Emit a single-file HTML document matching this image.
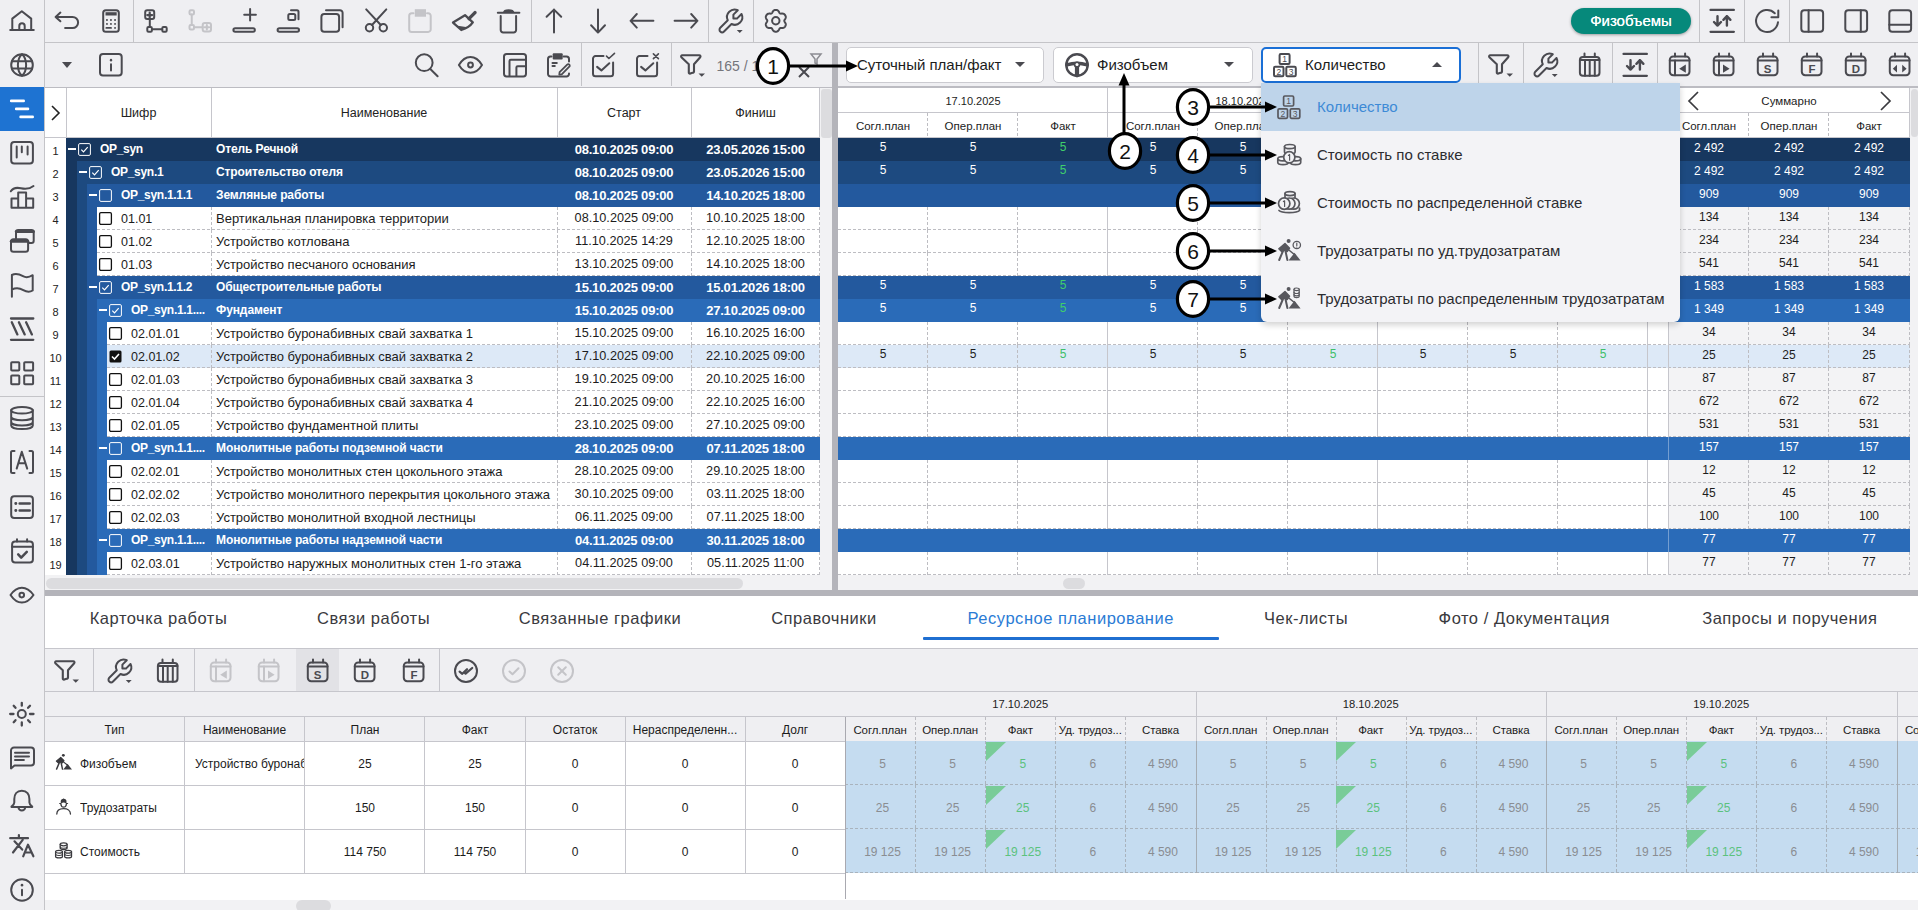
<!DOCTYPE html><html><head><meta charset="utf-8"><style>

*{box-sizing:border-box}
html,body{margin:0;padding:0}
body{width:1918px;height:910px;overflow:hidden;position:relative;background:#efeff2;font-family:"Liberation Sans",sans-serif;color:#222}
.ic{position:absolute;overflow:visible}
.t{position:absolute;white-space:nowrap;overflow:hidden}
.c{text-align:center}
div{position:absolute}

</style></head><body>
<div style="position:absolute;left:0px;top:0px;width:44px;height:910px;background:#efeff2"></div>
<div style="position:absolute;left:44px;top:0px;width:1px;height:910px;background:#c4c4c8"></div>
<div style="position:absolute;left:0px;top:87px;width:44px;height:44px;background:#1e73d2"></div>
<svg class="ic" style="left:10.00px;top:9.00px;width:24.0px;height:24.0px;color:#4a4a50" viewBox="0 0 24 24" fill="none" stroke="currentColor" stroke-width="2" stroke-linecap="round" stroke-linejoin="round"><path d="M0.3 21H23.7" stroke-width="2.2"/><path d="M2.3 20.8V9.6L11.8 2.3L21.2 9.6V20.8M9.3 20.8V16.9A2.7 2.7 0 0 1 14.7 16.9V20.8"/></svg>
<svg class="ic" style="left:10.00px;top:53.00px;width:24.0px;height:24.0px;color:#4a4a50" viewBox="0 0 24 24" fill="none" stroke="currentColor" stroke-width="2" stroke-linecap="round" stroke-linejoin="round"><circle cx="12" cy="12" r="10.8"/><path d="M12 1.2C6.5 6 6.5 18 12 22.8M12 1.2C17.5 6 17.5 18 12 22.8M1.9 8.2H22.1M1.9 15.5H22.1"/></svg>
<svg class="ic" style="left:10.00px;top:141.00px;width:24.0px;height:24.0px;color:#4a4a50" viewBox="0 0 24 24" fill="none" stroke="currentColor" stroke-width="2" stroke-linecap="round" stroke-linejoin="round"><rect x="1.2" y="1" width="21.7" height="21.6" rx="3"/><path d="M6.7 5.5V16.4M11.8 5.5V11.3M17.6 5.5V13.5"/></svg>
<svg class="ic" style="left:10.00px;top:185.00px;width:24.0px;height:24.0px;color:#4a4a50" viewBox="0 0 24 24" fill="none" stroke="currentColor" stroke-width="2" stroke-linecap="round" stroke-linejoin="round"><path d="M0.8 6.3C3 2.8 6.5 2.3 11 3.3S19 4.6 23.5 1"/><path d="M1.5 22.8V13.6H8.2V22.8ZM8.2 22.8V7.4H16.1V22.8M16.1 22.8V13.6H23.2V22.8ZM1.5 22.8H23.2"/></svg>
<svg class="ic" style="left:10.00px;top:229.00px;width:24.0px;height:24.0px;color:#4a4a50" viewBox="0 0 24 24" fill="none" stroke="currentColor" stroke-width="2" stroke-linecap="round" stroke-linejoin="round"><rect x="1" y="10.2" width="17.1" height="12.6" rx="2.5"/><path d="M1.3 12.3H17.8" stroke-width="3"/><path d="M6 9.5V3.2A2.2 2.2 0 0 1 8.2 1H21.5A2.2 2.2 0 0 1 23.7 3.2V11.8A2.2 2.2 0 0 1 21.5 14H19"/><path d="M6.3 2.6H23.4" stroke-width="3"/></svg>
<svg class="ic" style="left:10.00px;top:273.00px;width:24.0px;height:24.0px;color:#4a4a50" viewBox="0 0 24 24" fill="none" stroke="currentColor" stroke-width="2" stroke-linecap="round" stroke-linejoin="round"><path d="M1.9 23.7V2C6 -0.2 9.5 1.2 13 3.2S19.5 4.2 22.7 2.2V17.5C19.8 19.3 16.5 19 13.3 17.1S6 14.5 1.9 16.5"/></svg>
<svg class="ic" style="left:10.00px;top:317.00px;width:24.0px;height:24.0px;color:#4a4a50" viewBox="0 0 24 24" fill="none" stroke="currentColor" stroke-width="2" stroke-linecap="round" stroke-linejoin="round"><path d="M1 1.5H23.3M1 22.8H23.3M1.8 5.2L7.4 17.4M8.9 5.2L14.7 17.4M16.1 5.2L21.9 17.4" stroke-width="2.3"/></svg>
<svg class="ic" style="left:10.00px;top:361.00px;width:24.0px;height:24.0px;color:#4a4a50" viewBox="0 0 24 24" fill="none" stroke="currentColor" stroke-width="2" stroke-linecap="round" stroke-linejoin="round"><rect x="1.2" y="1.2" width="8.1" height="8.3" rx="0.8"/><rect x="14.2" y="1.2" width="8.9" height="8.3" rx="0.8"/><rect x="1.2" y="14.4" width="8.1" height="8.9" rx="0.8"/><rect x="14.2" y="14.4" width="8.9" height="8.9" rx="0.8"/></svg>
<svg class="ic" style="left:10.00px;top:406.00px;width:24.0px;height:24.0px;color:#4a4a50" viewBox="0 0 24 24" fill="none" stroke="currentColor" stroke-width="2" stroke-linecap="round" stroke-linejoin="round"><ellipse cx="12" cy="4.3" rx="10.8" ry="3.3"/><path d="M1.2 4.3V19.6C1.2 21.6 6 23.1 12 23.1S22.8 21.6 22.8 19.6V4.3M1.2 10.8C1.2 12.8 6 14.3 12 14.3S22.8 12.8 22.8 10.8M1.2 16C1.2 18 6 19.5 12 19.5S22.8 18 22.8 16"/></svg>
<svg class="ic" style="left:10.00px;top:450.00px;width:24.0px;height:24.0px;color:#4a4a50" viewBox="0 0 24 24" fill="none" stroke="currentColor" stroke-width="2" stroke-linecap="round" stroke-linejoin="round"><path d="M4.5 1H2.5A1.5 1.5 0 0 0 1 2.5V21.5A1.5 1.5 0 0 0 2.5 23H4.5M19.5 1H21.5A1.5 1.5 0 0 1 23 2.5V21.5A1.5 1.5 0 0 1 21.5 23H19.5M6.7 18.6L11.8 1.8L17.2 18.6M8.4 13.2H15.6"/></svg>
<svg class="ic" style="left:10.00px;top:494.50px;width:24.0px;height:24.0px;color:#4a4a50" viewBox="0 0 24 24" fill="none" stroke="currentColor" stroke-width="2" stroke-linecap="round" stroke-linejoin="round"><rect x="1.2" y="1.2" width="21.7" height="21.7" rx="3"/><path d="M5.7 8.5h.2M5.7 15.5h.2" stroke-width="2.8"/><path d="M9.6 8.5H19.8M9.6 15.5H19.8" stroke-width="2.4"/></svg>
<svg class="ic" style="left:10.00px;top:538.50px;width:24.0px;height:24.0px;color:#4a4a50" viewBox="0 0 24 24" fill="none" stroke="currentColor" stroke-width="2" stroke-linecap="round" stroke-linejoin="round"><rect x="2.1" y="2.6" width="20.8" height="20.8" rx="3"/><path d="M7 0.2V2.6M17.1 0.2V2.6M2.1 7.7H22.9"/><path d="M8.2 15.3L11.2 18.6L16.8 12.8" stroke-width="2.5"/></svg>
<svg class="ic" style="left:10.00px;top:582.50px;width:24.0px;height:24.0px;color:#4a4a50" viewBox="0 0 24 24" fill="none" stroke="currentColor" stroke-width="2" stroke-linecap="round" stroke-linejoin="round"><path d="M0.5 12C4 6.8 8 4.7 11.9 4.7S19.8 6.8 23.5 12C19.8 17.2 15.8 19.6 11.9 19.6S4 17.2 0.5 12Z"/><circle cx="11.75" cy="12.1" r="2.3"/></svg>
<svg class="ic" style="left:10.00px;top:701.50px;width:24.0px;height:24.0px;color:#4a4a50" viewBox="0 0 24 24" fill="none" stroke="currentColor" stroke-width="2" stroke-linecap="round" stroke-linejoin="round"><circle cx="11.8" cy="12" r="4"/><path d="M11.8 0.8V3.7M11.8 20.5V23.5M0.2 12H3.5M20 12H23.5M3.7 3.8L5.5 5.8M18.1 18.2L20 20.2M3.7 20.2L5.5 18.2M18.1 5.8L20 3.8" stroke-width="2.3"/></svg>
<svg class="ic" style="left:10.00px;top:745.00px;width:24.0px;height:24.0px;color:#4a4a50" viewBox="0 0 24 24" fill="none" stroke="currentColor" stroke-width="2" stroke-linecap="round" stroke-linejoin="round"><path d="M1 23.4V5.5A3 3 0 0 1 4 2.5H21A3 3 0 0 1 24 5.5V17.5A3 3 0 0 1 21 20.5H4.5Z"/><path d="M5 7.7H19M5 11.5H19M5 15H13.9"/></svg>
<svg class="ic" style="left:10.00px;top:790.00px;width:24.0px;height:24.0px;color:#4a4a50" viewBox="0 0 24 24" fill="none" stroke="currentColor" stroke-width="2" stroke-linecap="round" stroke-linejoin="round"><path d="M11.8 0.8C6.8 0.8 4.3 4.5 4.3 9V12.5C4.3 14 3 15.5 1.5 16.6V17H22.2V16.6C20.7 15.5 19.4 14 19.4 12.5V9C19.4 4.5 17 0.8 11.8 0.8Z"/><path d="M8.5 17.2A3.3 3.3 0 0 0 15.2 17.2"/></svg>
<svg class="ic" style="left:10.00px;top:834.00px;width:24.0px;height:24.0px;color:#4a4a50" viewBox="0 0 24 24" fill="none" stroke="currentColor" stroke-width="2" stroke-linecap="round" stroke-linejoin="round"><path d="M0.2 4.2H18M8.9 1V4.2M12.7 5.9L3 18.5M4.5 7.3L12.2 15.6M13.2 22.3L18 10.7L23.4 22.3M15 18.5H21.5" stroke-width="2.2"/></svg>
<svg class="ic" style="left:10.00px;top:878.00px;width:24.0px;height:24.0px;color:#4a4a50" viewBox="0 0 24 24" fill="none" stroke="currentColor" stroke-width="2" stroke-linecap="round" stroke-linejoin="round"><circle cx="12" cy="12" r="10.8"/><path d="M12 7V7.2" stroke-width="2.6"/><path d="M12 11.7V17.2"/></svg>
<svg class="ic" style="left:0px;top:87px;width:44px;height:44px" viewBox="0 0 44 44" fill="none" stroke="#fff" stroke-width="2.6" stroke-linecap="round"><path d="M11.2 13.9H23.7M16.2 21.9H28M20.6 29.9H32.7"/></svg>
<div style="position:absolute;left:0px;top:396px;width:44px;height:1px;background:#c4c4c8"></div>
<div style="position:absolute;left:45px;top:42px;width:1873px;height:1px;background:#c4c4c8"></div>
<div style="position:absolute;left:133px;top:0px;width:1px;height:42px;background:#c4c4c8"></div>
<div style="position:absolute;left:531px;top:0px;width:1px;height:42px;background:#c4c4c8"></div>
<div style="position:absolute;left:708px;top:0px;width:1px;height:42px;background:#c4c4c8"></div>
<div style="position:absolute;left:753px;top:0px;width:1px;height:42px;background:#c4c4c8"></div>
<div style="position:absolute;left:1699px;top:0px;width:1px;height:42px;background:#c4c4c8"></div>
<div style="position:absolute;left:1744px;top:0px;width:1px;height:42px;background:#c4c4c8"></div>
<div style="position:absolute;left:1789px;top:0px;width:1px;height:42px;background:#c4c4c8"></div>
<svg class="ic" style="left:55.00px;top:9.00px;width:24.0px;height:24.0px;color:#4a4a50" viewBox="0 0 24 24" fill="none" stroke="currentColor" stroke-width="2" stroke-linecap="round" stroke-linejoin="round"><path d="M5.4 3.6L0.6 7.9l4.8 4.4M0.6 7.9H17.5a5.6 5.6 0 0 1 0 11.2H10.1"/></svg>
<svg class="ic" style="left:99.00px;top:9.00px;width:24.0px;height:24.0px;color:#4a4a50" viewBox="0 0 24 24" fill="none" stroke="currentColor" stroke-width="2" stroke-linecap="round" stroke-linejoin="round"><rect x="4.2" y="1.2" width="15.6" height="21.6" rx="2.6"/><rect x="6.5" y="3.2" width="11.2" height="3.3" fill="currentColor" stroke="none"/><path d="M7.9 11h.1M11.9 11h.1M16 11h.1M7.9 14.9h.1M11.9 14.9h.1M16 14.9h.1M16 18.9h.1M7.4 18.9h4.6" stroke-width="1.9"/></svg>
<svg class="ic" style="left:144.00px;top:9.00px;width:24.0px;height:24.0px;color:#4a4a50" viewBox="0 0 24 24" fill="none" stroke="currentColor" stroke-width="2" stroke-linecap="round" stroke-linejoin="round"><rect x="1.2" y="1.2" width="9" height="8.7" rx="2"/><path d="M5.7 3.6v4.9M3.25 6.05h4.9" stroke-width="2.2"/><path d="M5.8 11v7"/><rect x="3.3" y="18.1" width="4.6" height="4.6" rx="1.2"/><rect x="18.3" y="18.1" width="4.4" height="4.6" rx="1.2"/><path d="M8 20.3h10.2"/></svg>
<svg class="ic" style="left:188.00px;top:9.00px;width:24.0px;height:24.0px;color:#c4c4c8" viewBox="0 0 24 24" fill="none" stroke="currentColor" stroke-width="2" stroke-linecap="round" stroke-linejoin="round"><rect x="1.5" y="1.2" width="4.5" height="4.3" rx="1.2"/><path d="M3.75 5.5V16"/><rect x="1.5" y="16" width="4.5" height="4.5" rx="1.2"/><path d="M6 18.25h8.7"/><rect x="14.7" y="14" width="8.3" height="8.4" rx="2"/><path d="M18.85 15.9v4.6M16.55 18.2h4.6"/></svg>
<svg class="ic" style="left:232.00px;top:9.00px;width:24.0px;height:24.0px;color:#4a4a50" viewBox="0 0 24 24" fill="none" stroke="currentColor" stroke-width="2" stroke-linecap="round" stroke-linejoin="round"><path d="M18.1 0V11.6M12.2 5.75H23.9"/><rect x="1.4" y="19.2" width="21.5" height="3.6" rx="1.8"/></svg>
<svg class="ic" style="left:276.00px;top:9.00px;width:24.0px;height:24.0px;color:#4a4a50" viewBox="0 0 24 24" fill="none" stroke="currentColor" stroke-width="2" stroke-linecap="round" stroke-linejoin="round"><rect x="12.3" y="5.1" width="7" height="6" rx="1.5"/><path d="M15 1.2H21a1.5 1.5 0 0 1 1.5 1.5V10.2"/><rect x="1.6" y="19.2" width="21.4" height="3.6" rx="1.8"/></svg>
<svg class="ic" style="left:320.00px;top:9.00px;width:24.0px;height:24.0px;color:#4a4a50" viewBox="0 0 24 24" fill="none" stroke="currentColor" stroke-width="2" stroke-linecap="round" stroke-linejoin="round"><rect x="1.4" y="5.1" width="17.7" height="17.7" rx="2.8"/><path d="M6 1.2H20a2.6 2.6 0 0 1 2.6 2.6V18.2"/></svg>
<svg class="ic" style="left:364.00px;top:9.00px;width:24.0px;height:24.0px;color:#4a4a50" viewBox="0 0 24 24" fill="none" stroke="currentColor" stroke-width="2" stroke-linecap="round" stroke-linejoin="round"><circle cx="5.5" cy="18.7" r="3.7"/><circle cx="19.3" cy="18.7" r="3.7"/><path d="M2.2 0.4L16.8 16M22.3 0.4L8 16"/></svg>
<svg class="ic" style="left:408.00px;top:9.00px;width:24.0px;height:24.0px;color:#c4c4c8" viewBox="0 0 24 24" fill="none" stroke="currentColor" stroke-width="2" stroke-linecap="round" stroke-linejoin="round"><path d="M5.5 4.2H3.7A2.5 2.5 0 0 0 1.2 6.7V20.4A2.5 2.5 0 0 0 3.7 22.9H20.2A2.5 2.5 0 0 0 22.7 20.4V6.7A2.5 2.5 0 0 0 20.2 4.2H19"/><rect x="6.8" y="0.2" width="11.2" height="7.5" fill="currentColor" stroke="none"/></svg>
<svg class="ic" style="left:452.00px;top:9.00px;width:24.0px;height:24.0px;color:#4a4a50" viewBox="0 0 24 24" fill="none" stroke="currentColor" stroke-width="2" stroke-linecap="round" stroke-linejoin="round"><path d="M23 3.6L17 9.6" stroke-width="3.4"/><path d="M1 13.6L13 6.2L20.8 13.4C18.5 16.8 14 19.5 9.3 21Z" stroke-width="2.3"/><path d="M4 16.4L9.3 21C12 20.2 14 19.3 15.5 18.3Z" fill="currentColor" stroke="none"/></svg>
<svg class="ic" style="left:496.00px;top:9.00px;width:24.0px;height:24.0px;color:#4a4a50" viewBox="0 0 24 24" fill="none" stroke="currentColor" stroke-width="2" stroke-linecap="round" stroke-linejoin="round"><path d="M1.8 3.7H23.4"/><path d="M7 3.7C7 1.2 9 0.2 12.6 0.2S18.3 1.2 18.3 3.7Z" fill="currentColor" stroke="none"/><path d="M4.7 7V21A2.4 2.4 0 0 0 7.1 23.4H17.7A2.4 2.4 0 0 0 20.1 21V7"/></svg>
<svg class="ic" style="left:541.70px;top:9.00px;width:24.0px;height:24.0px;color:#4a4a50" viewBox="0 0 24 24" fill="none" stroke="currentColor" stroke-width="2" stroke-linecap="round" stroke-linejoin="round"><path d="M12 0.6V23.6M4.6 7.8L12 0.6L19.2 7.8"/></svg>
<svg class="ic" style="left:585.50px;top:9.00px;width:24.0px;height:24.0px;color:#4a4a50" viewBox="0 0 24 24" fill="none" stroke="currentColor" stroke-width="2" stroke-linecap="round" stroke-linejoin="round"><path d="M12 0.6V23.6M5.1 16.3L12 23.6L19 16.3"/></svg>
<svg class="ic" style="left:629.70px;top:9.00px;width:24.0px;height:24.0px;color:#4a4a50" viewBox="0 0 24 24" fill="none" stroke="currentColor" stroke-width="2" stroke-linecap="round" stroke-linejoin="round"><path d="M0.6 11.8H23.4M6.8 5L0.6 11.8L6.8 18.6"/></svg>
<svg class="ic" style="left:673.60px;top:9.00px;width:24.0px;height:24.0px;color:#4a4a50" viewBox="0 0 24 24" fill="none" stroke="currentColor" stroke-width="2" stroke-linecap="round" stroke-linejoin="round"><path d="M0.6 11.8H23.4M17.2 5L23.4 11.8L17.2 18.6"/></svg>
<svg class="ic" style="left:719.00px;top:9.00px;width:24.0px;height:24.0px;color:#4a4a50" viewBox="0 0 24 24" fill="none" stroke="currentColor" stroke-width="2" stroke-linecap="round" stroke-linejoin="round"><g transform="translate(-3.1 -3.1) scale(1.25)" stroke-width="1.6"><path d="M17 10h-3v-3l3.5-3.5a6 6 0 0 0-8 8l-6 6a2 2 0 0 0 3 3l6-6a6 6 0 0 0 8-8l-3.5 3.5"/></g><path d="M17.8 21.1H23.7L20.75 23.9Z" fill="currentColor" stroke="none"/></svg>
<svg class="ic" style="left:763.70px;top:9.00px;width:24.0px;height:24.0px;color:#4a4a50" viewBox="0 0 24 24" fill="none" stroke="currentColor" stroke-width="2" stroke-linecap="round" stroke-linejoin="round"><path d="M20.30 11.80 L20.35 12.14 L20.48 12.48 L20.68 12.85 L20.93 13.25 L21.19 13.67 L21.43 14.11 L21.62 14.57 L21.75 15.03 L21.80 15.49 L21.77 15.93 L21.67 16.35 L21.51 16.75 L21.31 17.13 L21.09 17.49 L20.85 17.85 L20.57 18.17 L20.24 18.46 L19.86 18.68 L19.42 18.85 L18.95 18.95 L18.45 18.99 L17.94 18.99 L17.46 18.98 L17.01 18.96 L16.60 18.99 L16.25 19.07 L15.96 19.22 L15.70 19.46 L15.47 19.77 L15.26 20.15 L15.04 20.57 L14.79 21.01 L14.52 21.43 L14.20 21.81 L13.86 22.13 L13.48 22.38 L13.07 22.54 L12.65 22.64 L12.23 22.69 L11.80 22.70 L11.37 22.69 L10.95 22.64 L10.53 22.54 L10.12 22.38 L9.74 22.13 L9.40 21.81 L9.08 21.43 L8.81 21.01 L8.56 20.57 L8.34 20.15 L8.13 19.77 L7.90 19.46 L7.64 19.22 L7.35 19.07 L7.00 18.99 L6.59 18.96 L6.14 18.98 L5.66 18.99 L5.15 18.99 L4.65 18.95 L4.18 18.85 L3.74 18.68 L3.36 18.46 L3.03 18.17 L2.75 17.85 L2.51 17.49 L2.29 17.13 L2.09 16.75 L1.93 16.35 L1.83 15.93 L1.80 15.49 L1.85 15.03 L1.98 14.57 L2.17 14.11 L2.41 13.67 L2.67 13.25 L2.92 12.85 L3.12 12.48 L3.25 12.14 L3.30 11.80 L3.25 11.46 L3.12 11.12 L2.92 10.75 L2.67 10.35 L2.41 9.93 L2.17 9.49 L1.98 9.03 L1.85 8.57 L1.80 8.11 L1.83 7.67 L1.93 7.25 L2.09 6.85 L2.29 6.47 L2.51 6.11 L2.75 5.75 L3.03 5.43 L3.36 5.14 L3.74 4.92 L4.18 4.75 L4.65 4.65 L5.15 4.61 L5.66 4.61 L6.14 4.62 L6.59 4.64 L7.00 4.61 L7.35 4.53 L7.64 4.38 L7.90 4.14 L8.13 3.83 L8.34 3.45 L8.56 3.03 L8.81 2.59 L9.08 2.17 L9.40 1.79 L9.74 1.47 L10.12 1.22 L10.53 1.06 L10.95 0.96 L11.37 0.91 L11.80 0.90 L12.23 0.91 L12.65 0.96 L13.07 1.06 L13.48 1.22 L13.86 1.47 L14.20 1.79 L14.52 2.17 L14.79 2.59 L15.04 3.03 L15.26 3.45 L15.47 3.83 L15.70 4.14 L15.96 4.38 L16.25 4.53 L16.60 4.61 L17.01 4.64 L17.46 4.62 L17.94 4.61 L18.45 4.61 L18.95 4.65 L19.42 4.75 L19.86 4.92 L20.24 5.14 L20.57 5.43 L20.85 5.75 L21.09 6.11 L21.31 6.47 L21.51 6.85 L21.67 7.25 L21.77 7.67 L21.80 8.11 L21.75 8.57 L21.62 9.03 L21.43 9.49 L21.19 9.93 L20.93 10.35 L20.68 10.75 L20.48 11.12 L20.35 11.46 L20.30 11.80Z"/><circle cx="11.8" cy="11.8" r="3.7"/></svg>
<svg class="ic" style="left:1709.50px;top:9.00px;width:24.0px;height:24.0px;color:#4a4a50" viewBox="0 0 24 24" fill="none" stroke="currentColor" stroke-width="2" stroke-linecap="round" stroke-linejoin="round"><path d="M0.5 0.9H23.9M0.5 22.8H23.9" stroke-width="2.2"/><path d="M7.5 7.2V16.5M4 13L7.5 16.6L11 13M16.9 16.6V7.3M13.4 10.8L16.9 7.2L20.4 10.8" stroke-width="2.4"/></svg>
<svg class="ic" style="left:1755.00px;top:9.00px;width:24.0px;height:24.0px;color:#4a4a50" viewBox="0 0 24 24" fill="none" stroke="currentColor" stroke-width="2" stroke-linecap="round" stroke-linejoin="round"><path d="M23 13.2A11 11 0 1 1 19.8 4.2"/><path d="M16.4 8.2H23.3V1.6"/></svg>
<svg class="ic" style="left:1799.50px;top:9.00px;width:24.0px;height:24.0px;color:#4a4a50" viewBox="0 0 24 24" fill="none" stroke="currentColor" stroke-width="2" stroke-linecap="round" stroke-linejoin="round"><rect x="1.3" y="1.2" width="21.8" height="21.6" rx="3"/><path d="M8.6 1.2V22.8"/></svg>
<svg class="ic" style="left:1843.50px;top:9.00px;width:24.0px;height:24.0px;color:#4a4a50" viewBox="0 0 24 24" fill="none" stroke="currentColor" stroke-width="2" stroke-linecap="round" stroke-linejoin="round"><rect x="1.3" y="1.2" width="21.8" height="21.6" rx="3"/><path d="M16.8 1.2V22.8"/></svg>
<svg class="ic" style="left:1888.00px;top:9.00px;width:24.0px;height:24.0px;color:#4a4a50" viewBox="0 0 24 24" fill="none" stroke="currentColor" stroke-width="2" stroke-linecap="round" stroke-linejoin="round"><rect x="1.3" y="1.2" width="21.8" height="21.6" rx="3"/><path d="M1.3 15.7H23.1"/></svg>
<div style="left:1571px;top:8px;width:120px;height:26px;border-radius:13px;background:#06897b;box-shadow:0 1px 3px rgba(0,0,0,.35)"></div>
<div class="t" style="left:1571px;top:8px;width:120px;height:26px;line-height:26px;text-align:center;color:#fff;font-size:15px;text-shadow:0 0 .4px #fff">Физобъемы</div>
<div style="position:absolute;left:45px;top:87px;width:1873px;height:1px;background:#bcbcc2"></div>
<div style="position:absolute;left:838px;top:86px;width:1080px;height:2px;background:#bcbcc2"></div>
<div style="position:absolute;left:581px;top:43px;width:1px;height:43px;background:#c4c4c8"></div>
<div style="position:absolute;left:670.5px;top:43px;width:1px;height:43px;background:#c4c4c8"></div>
<div style="position:absolute;left:1478px;top:43px;width:1px;height:43px;background:#c4c4c8"></div>
<div style="position:absolute;left:1523px;top:43px;width:1px;height:43px;background:#c4c4c8"></div>
<div style="position:absolute;left:1612px;top:43px;width:1px;height:43px;background:#c4c4c8"></div>
<div style="position:absolute;left:1657px;top:43px;width:1px;height:43px;background:#c4c4c8"></div>
<svg class="ic" style="left:60px;top:60px;width:14px;height:10px" viewBox="0 0 14 10"><path d="M2 2h10L7 8z" fill="#4a4a50"/></svg>
<svg class="ic" style="left:99.00px;top:53.00px;width:24.0px;height:24.0px;color:#4a4a50" viewBox="0 0 24 24" fill="none" stroke="currentColor" stroke-width="2" stroke-linecap="round" stroke-linejoin="round"><rect x="1" y="1" width="21.7" height="21.5" rx="3"/><path d="M12 6.9v.3" stroke-width="2.4"/><path d="M12 11.3V17.5"/></svg>
<svg class="ic" style="left:414.00px;top:53.00px;width:24.0px;height:24.0px;color:#4a4a50" viewBox="0 0 24 24" fill="none" stroke="currentColor" stroke-width="2" stroke-linecap="round" stroke-linejoin="round"><circle cx="10.2" cy="9.7" r="8.4"/><path d="M16.3 16L23.6 23.3"/></svg>
<svg class="ic" style="left:458.00px;top:53.00px;width:24.0px;height:24.0px;color:#4a4a50" viewBox="0 0 24 24" fill="none" stroke="currentColor" stroke-width="2" stroke-linecap="round" stroke-linejoin="round"><path d="M0.9 12C4 6.8 8 4 12.4 4S20.9 6.8 24 12C20.9 17.2 16.8 19.8 12.4 19.8S4 17.2 0.9 12Z"/><circle cx="12.5" cy="12" r="2.4"/></svg>
<svg class="ic" style="left:502.50px;top:53.00px;width:24.0px;height:24.0px;color:#4a4a50" viewBox="0 0 24 24" fill="none" stroke="currentColor" stroke-width="2" stroke-linecap="round" stroke-linejoin="round"><rect x="1" y="1" width="22" height="22.4" rx="2.6"/><path d="M6.5 23V8.1Q6.5 6.8 7.8 6.8H23M13.4 23V14.6Q13.4 13.3 14.7 13.3H23"/></svg>
<svg class="ic" style="left:547.00px;top:53.00px;width:24.0px;height:24.0px;color:#4a4a50" viewBox="0 0 24 24" fill="none" stroke="currentColor" stroke-width="2" stroke-linecap="round" stroke-linejoin="round"><path d="M4.5 3.5H3.5A2.5 2.5 0 0 0 1 6V21A2.5 2.5 0 0 0 3.5 23.5H19.5A2.5 2.5 0 0 0 22 21V20.5M16.5 3.5H19.5A2.5 2.5 0 0 1 22 6V8.5"/><rect x="5.7" y="0.3" width="10" height="6.2" rx="1" fill="currentColor" stroke="none"/><path d="M5.5 9.9H9.8M5.5 13H7.8"/><path d="M12.6 19.2L20.2 11.6A1.45 1.45 0 0 1 22.3 13.7L14.7 21.3L12.3 21.6Z" stroke-width="1.8"/></svg>
<svg class="ic" style="left:591.00px;top:53.00px;width:24.0px;height:24.0px;color:#4a4a50" viewBox="0 0 24 24" fill="none" stroke="currentColor" stroke-width="2" stroke-linecap="round" stroke-linejoin="round"><path d="M12.5 3.1H4.5A2.5 2.5 0 0 0 2 5.6V20.8A2.5 2.5 0 0 0 4.5 23.3H19.6A2.5 2.5 0 0 0 22.1 20.8V9.4"/><path d="M6.1 13.9L10.4 17.4L18.3 10.2"/><path d="M15.5 3.1L17.9 5.5L23.5 0.3" stroke-width="1.6"/></svg>
<svg class="ic" style="left:635.00px;top:53.00px;width:24.0px;height:24.0px;color:#4a4a50" viewBox="0 0 24 24" fill="none" stroke="currentColor" stroke-width="2" stroke-linecap="round" stroke-linejoin="round"><path d="M12.5 3.1H4.5A2.5 2.5 0 0 0 2 5.6V20.8A2.5 2.5 0 0 0 4.5 23.3H19.6A2.5 2.5 0 0 0 22.1 20.8V9.4"/><path d="M6.1 13.9L10.4 17.4L18.3 10.2"/><path d="M18.4 0.8L23.4 5.6M23.4 0.8L18.4 5.6" stroke-width="1.6"/></svg>
<svg class="ic" style="left:679.00px;top:53.00px;width:24.0px;height:24.0px;color:#4a4a50" viewBox="0 0 24 24" fill="none" stroke="currentColor" stroke-width="2" stroke-linecap="round" stroke-linejoin="round"><path d="M3.3 2.2H20.3A1.2 1.2 0 0 1 21.2 4.2L15 11.3V18.6A1.2 1.2 0 0 1 13.6 19.8L11.2 20.6A1 1 0 0 1 9.8 19.6V11.3L2.4 4.2A1.2 1.2 0 0 1 3.3 2.2Z" stroke-width="2.1"/><path d="M19.5 20.6H26L22.75 23.8Z" fill="currentColor" stroke="none"/></svg>
<svg class="ic" style="left:1487.00px;top:53.00px;width:24.0px;height:24.0px;color:#4a4a50" viewBox="0 0 24 24" fill="none" stroke="currentColor" stroke-width="2" stroke-linecap="round" stroke-linejoin="round"><path d="M3.3 2.2H20.3A1.2 1.2 0 0 1 21.2 4.2L15 11.3V18.6A1.2 1.2 0 0 1 13.6 19.8L11.2 20.6A1 1 0 0 1 9.8 19.6V11.3L2.4 4.2A1.2 1.2 0 0 1 3.3 2.2Z" stroke-width="2.1"/><path d="M19.5 20.6H26L22.75 23.8Z" fill="currentColor" stroke="none"/></svg>
<svg class="ic" style="left:1533.50px;top:53.00px;width:24.0px;height:24.0px;color:#4a4a50" viewBox="0 0 24 24" fill="none" stroke="currentColor" stroke-width="2" stroke-linecap="round" stroke-linejoin="round"><g transform="translate(-3.1 -3.1) scale(1.25)" stroke-width="1.6"><path d="M17 10h-3v-3l3.5-3.5a6 6 0 0 0-8 8l-6 6a2 2 0 0 0 3 3l6-6a6 6 0 0 0 8-8l-3.5 3.5"/></g><path d="M17.8 21.1H23.7L20.75 23.9Z" fill="currentColor" stroke="none"/></svg>
<svg class="ic" style="left:1578.00px;top:53.00px;width:24.0px;height:24.0px;color:#4a4a50" viewBox="0 0 24 24" fill="none" stroke="currentColor" stroke-width="2" stroke-linecap="round" stroke-linejoin="round"><rect x="1.9" y="4.1" width="19.6" height="18.7" rx="3"/><path d="M6.5 0.5V4M16.8 0.5V4M1.9 6.9H21.5M7 6.9V22.8M11.7 6.9V22.8M16.8 6.9V22.8"/></svg>
<svg class="ic" style="left:1622.50px;top:53.00px;width:24.0px;height:24.0px;color:#4a4a50" viewBox="0 0 24 24" fill="none" stroke="currentColor" stroke-width="2" stroke-linecap="round" stroke-linejoin="round"><path d="M0.5 0.9H23.9M0.5 22.8H23.9" stroke-width="2.2"/><path d="M7.5 7.2V16.5M4 13L7.5 16.6L11 13M16.9 16.6V7.3M13.4 10.8L16.9 7.2L20.4 10.8" stroke-width="2.4"/></svg>
<svg class="ic" style="left:1668.00px;top:53.00px;width:24.0px;height:24.0px;color:#4a4a50" viewBox="0 0 24 24" fill="none" stroke="currentColor" stroke-width="2" stroke-linecap="round" stroke-linejoin="round"><rect x="1.8" y="3.4" width="19.7" height="18.8" rx="3.4"/><path d="M7 0.4V3.4M17.1 0.4V3.4M1.8 7.6H21.5"/><path d="M7 7.6V22.2"/><path d="M17.8 11.6V19.8L11.2 15.7Z" fill="currentColor" stroke="none"/></svg>
<svg class="ic" style="left:1712.00px;top:53.00px;width:24.0px;height:24.0px;color:#4a4a50" viewBox="0 0 24 24" fill="none" stroke="currentColor" stroke-width="2" stroke-linecap="round" stroke-linejoin="round"><rect x="1.8" y="3.4" width="19.7" height="18.8" rx="3.4"/><path d="M7 0.4V3.4M17.1 0.4V3.4M1.8 7.6H21.5"/><path d="M7 7.6V22.2"/><path d="M11 11.6V19.8L17.6 15.7Z" fill="currentColor" stroke="none"/></svg>
<svg class="ic" style="left:1756.00px;top:53.00px;width:24.0px;height:24.0px;color:#4a4a50" viewBox="0 0 24 24" fill="none" stroke="currentColor" stroke-width="2" stroke-linecap="round" stroke-linejoin="round"><rect x="1.8" y="3.4" width="19.7" height="18.8" rx="3.4"/><path d="M7 0.4V3.4M17.1 0.4V3.4M1.8 7.6H21.5"/><text x="11.65" y="19.8" text-anchor="middle" font-family="Liberation Sans" font-weight="bold" font-size="11.5" fill="currentColor" stroke="none">S</text></svg>
<svg class="ic" style="left:1800.00px;top:53.00px;width:24.0px;height:24.0px;color:#4a4a50" viewBox="0 0 24 24" fill="none" stroke="currentColor" stroke-width="2" stroke-linecap="round" stroke-linejoin="round"><rect x="1.8" y="3.4" width="19.7" height="18.8" rx="3.4"/><path d="M7 0.4V3.4M17.1 0.4V3.4M1.8 7.6H21.5"/><text x="11.9" y="19.8" text-anchor="middle" font-family="Liberation Sans" font-weight="bold" font-size="11.5" fill="currentColor" stroke="none">F</text></svg>
<svg class="ic" style="left:1844.00px;top:53.00px;width:24.0px;height:24.0px;color:#4a4a50" viewBox="0 0 24 24" fill="none" stroke="currentColor" stroke-width="2" stroke-linecap="round" stroke-linejoin="round"><rect x="1.8" y="3.4" width="19.7" height="18.8" rx="3.4"/><path d="M7 0.4V3.4M17.1 0.4V3.4M1.8 7.6H21.5"/><text x="11.9" y="19.8" text-anchor="middle" font-family="Liberation Sans" font-weight="bold" font-size="11.5" fill="currentColor" stroke="none">D</text></svg>
<svg class="ic" style="left:1888.00px;top:53.00px;width:24.0px;height:24.0px;color:#4a4a50" viewBox="0 0 24 24" fill="none" stroke="currentColor" stroke-width="2" stroke-linecap="round" stroke-linejoin="round"><rect x="1.8" y="3.4" width="19.7" height="18.8" rx="3.4"/><path d="M7 0.4V3.4M17.1 0.4V3.4M1.8 7.6H21.5"/><path d="M9 11.8V19.6L4.8 15.7Z M14.2 11.8V19.6L18.6 15.7Z" fill="currentColor" stroke="none"/></svg>
<div class="t" style="left:716.5px;top:56px;width:60px;height:20px;line-height:20px;font-size:14px;color:#75757b">165 / 1</div>
<svg class="ic" style="left:796px;top:64px;width:16px;height:16px" viewBox="0 0 16 16" fill="none" stroke="#4a4a50" stroke-width="2"><path d="M3 3l10 10M13 3L3 13"/></svg>
<svg class="ic" style="left:809px;top:52px;width:14px;height:14px" viewBox="0 0 14 14" fill="none" stroke="#8c8c92" stroke-width="1.5"><path d="M2 2h10L8 7v5L6 11V7z"/></svg>
<div style="left:846px;top:47px;width:198px;height:36px;border:1px solid #cbcbd0;border-radius:5px;background:#fff"></div>
<div class="t" style="left:857px;top:55px;width:150px;height:20px;line-height:20px;font-size:15px;color:#1c1c1c">Суточный план/факт</div>
<svg class="ic" style="left:1014px;top:60px;width:12px;height:10px" viewBox="0 0 12 10"><path d="M1 2h10L6 7z" fill="#4a4a50"/></svg>
<div style="left:1053px;top:47px;width:200px;height:36px;border:1px solid #cbcbd0;border-radius:5px;background:#fff"></div>
<svg class="ic" style="left:1065.00px;top:53.00px;width:24.0px;height:24.0px;color:#4a4a50" viewBox="0 0 24 24" fill="none" stroke="currentColor" stroke-width="2" stroke-linecap="round" stroke-linejoin="round"><circle cx="12" cy="12" r="10.7" stroke-width="2.4"/><path d="M1.8 11.8C6 10.5 8 10.2 12 10.2S18 10.5 22.2 11.8" stroke-width="3.4"/><path d="M12 12.5V22.3" stroke-width="4.2"/><circle cx="12" cy="11.6" r="3.2" fill="currentColor" stroke="none"/><circle cx="12" cy="11.6" r="1.5" fill="#fff" stroke="none"/></svg>
<div class="t" style="left:1097px;top:55px;width:150px;height:20px;line-height:20px;font-size:15px;color:#1c1c1c">Физобъем</div>
<svg class="ic" style="left:1223px;top:60px;width:12px;height:10px" viewBox="0 0 12 10"><path d="M1 2h10L6 7z" fill="#4a4a50"/></svg>
<div style="left:1261px;top:47px;width:200px;height:36px;border:2px solid #1a6fd6;border-radius:5px;background:#fff"></div>
<svg class="ic" style="left:1273.00px;top:53.00px;width:24.0px;height:24.0px;color:#4a4a50" viewBox="0 0 24 24" fill="none" stroke="currentColor" stroke-width="2" stroke-linecap="round" stroke-linejoin="round"><rect x="6.6" y="1" width="10" height="10" rx="1.2"/><rect x="1" y="13.8" width="9.5" height="9.5" rx="1.2"/><rect x="13.3" y="13.8" width="9.5" height="9.5" rx="1.2"/><g fill="currentColor" stroke="none" font-family="Liberation Sans" font-size="8.5" text-anchor="middle"><text x="11.6" y="9">1</text><text x="5.75" y="21.6">2</text><text x="18.05" y="21.6">3</text></g></svg>
<div class="t" style="left:1305px;top:55px;width:150px;height:20px;line-height:20px;font-size:15px;color:#1c1c1c">Количество</div>
<svg class="ic" style="left:1431px;top:59px;width:12px;height:10px" viewBox="0 0 12 10"><path d="M1 8h10L6 3z" fill="#4a4a50"/></svg>
<div style="position:absolute;left:45px;top:88px;width:775px;height:488px;background:#fff"></div>
<div style="position:absolute;left:45px;top:137px;width:775px;height:1px;background:#c6c6cc"></div>
<div style="position:absolute;left:66px;top:88px;width:1px;height:50px;background:#c6c6cc"></div>
<div style="position:absolute;left:211px;top:88px;width:1px;height:50px;background:#c6c6cc"></div>
<div style="position:absolute;left:557px;top:88px;width:1px;height:50px;background:#c6c6cc"></div>
<div style="position:absolute;left:691px;top:88px;width:1px;height:50px;background:#c6c6cc"></div>
<div style="position:absolute;left:819px;top:88px;width:1px;height:50px;background:#c6c6cc"></div>
<svg class="ic" style="left:49px;top:104px;width:12px;height:18px" viewBox="0 0 12 18" fill="none" stroke="#222" stroke-width="1.6"><path d="M3 2l7 7-7 7"/></svg>
<div class="t" style="left:66px;top:104px;width:145px;height:18px;line-height:18px;text-align:center;font-size:12.5px;color:#222">Шифр</div>
<div class="t" style="left:211px;top:104px;width:346px;height:18px;line-height:18px;text-align:center;font-size:12.5px;color:#222">Наименование</div>
<div class="t" style="left:557px;top:104px;width:134px;height:18px;line-height:18px;text-align:center;font-size:12.5px;color:#222">Старт</div>
<div class="t" style="left:691px;top:104px;width:129px;height:18px;line-height:18px;text-align:center;font-size:12.5px;color:#222">Финиш</div>
<div class="t" style="left:45px;top:138px;width:21px;height:23px;line-height:23px;text-align:center;font-size:11px;color:#222;padding-top:2px">1</div>
<div style="position:absolute;left:66px;top:138px;width:754px;height:23px;background:#17375f"></div>
<div style="position:absolute;left:67.5px;top:148px;width:8.5px;height:2px;background:#fff"></div>
<svg class="ic" style="left:78px;top:142.5px;width:13px;height:13px" viewBox="0 0 13 13"><rect x=".6" y=".6" width="11.8" height="11.8" rx="1.3" fill="none" stroke="#fff" stroke-width="1"/><path d="M3.3 6.6l2.2 2.2 4.2-4.6" fill="none" stroke="#fff" stroke-width="1.2"/></svg>
<div class="t" style="left:100px;top:138px;width:109px;height:23px;line-height:23px;font-size:12px;font-weight:bold;color:#fff;letter-spacing:-.3px">OP_syn</div>
<div class="t" style="left:216px;top:138px;width:340px;height:23px;line-height:23px;font-size:12px;font-weight:bold;color:#fff;letter-spacing:-.1px">Отель Речной</div>
<div class="t" style="left:557px;top:138px;width:134px;height:23px;line-height:23px;text-align:center;font-size:13px;font-weight:bold;color:#fff;letter-spacing:-.2px">08.10.2025 09:00</div>
<div class="t" style="left:691px;top:138px;width:129px;height:23px;line-height:23px;text-align:center;font-size:13px;font-weight:bold;color:#fff;letter-spacing:-.2px">23.05.2026 15:00</div>
<div class="t" style="left:45px;top:161px;width:21px;height:23px;line-height:23px;text-align:center;font-size:11px;color:#222;padding-top:2px">2</div>
<div style="position:absolute;left:66px;top:161px;width:11px;height:23px;background:#17375f"></div>
<div style="position:absolute;left:77px;top:161px;width:743px;height:23px;background:#1d4a80"></div>
<div style="position:absolute;left:78.5px;top:171px;width:8.5px;height:2px;background:#fff"></div>
<svg class="ic" style="left:89px;top:165.5px;width:13px;height:13px" viewBox="0 0 13 13"><rect x=".6" y=".6" width="11.8" height="11.8" rx="1.3" fill="none" stroke="#fff" stroke-width="1"/><path d="M3.3 6.6l2.2 2.2 4.2-4.6" fill="none" stroke="#fff" stroke-width="1.2"/></svg>
<div class="t" style="left:111px;top:161px;width:98px;height:23px;line-height:23px;font-size:12px;font-weight:bold;color:#fff;letter-spacing:-.3px">OP_syn.1</div>
<div class="t" style="left:216px;top:161px;width:340px;height:23px;line-height:23px;font-size:12px;font-weight:bold;color:#fff;letter-spacing:-.1px">Строительство отеля</div>
<div class="t" style="left:557px;top:161px;width:134px;height:23px;line-height:23px;text-align:center;font-size:13px;font-weight:bold;color:#fff;letter-spacing:-.2px">08.10.2025 09:00</div>
<div class="t" style="left:691px;top:161px;width:129px;height:23px;line-height:23px;text-align:center;font-size:13px;font-weight:bold;color:#fff;letter-spacing:-.2px">23.05.2026 15:00</div>
<div class="t" style="left:45px;top:184px;width:21px;height:23px;line-height:23px;text-align:center;font-size:11px;color:#222;padding-top:2px">3</div>
<div style="position:absolute;left:66px;top:184px;width:11px;height:23px;background:#17375f"></div>
<div style="position:absolute;left:77px;top:184px;width:10px;height:23px;background:#1d4a80"></div>
<div style="position:absolute;left:87px;top:184px;width:733px;height:23px;background:#23599e"></div>
<div style="position:absolute;left:88.5px;top:194px;width:8.5px;height:2px;background:#fff"></div>
<svg class="ic" style="left:99px;top:188.5px;width:13px;height:13px" viewBox="0 0 13 13"><rect x=".6" y=".6" width="11.8" height="11.8" rx="1.3" fill="none" stroke="#fff" stroke-width="1"/></svg>
<div class="t" style="left:121px;top:184px;width:88px;height:23px;line-height:23px;font-size:12px;font-weight:bold;color:#fff;letter-spacing:-.3px">OP_syn.1.1.1</div>
<div class="t" style="left:216px;top:184px;width:340px;height:23px;line-height:23px;font-size:12px;font-weight:bold;color:#fff;letter-spacing:-.1px">Земляные работы</div>
<div class="t" style="left:557px;top:184px;width:134px;height:23px;line-height:23px;text-align:center;font-size:13px;font-weight:bold;color:#fff;letter-spacing:-.2px">08.10.2025 09:00</div>
<div class="t" style="left:691px;top:184px;width:129px;height:23px;line-height:23px;text-align:center;font-size:13px;font-weight:bold;color:#fff;letter-spacing:-.2px">14.10.2025 18:00</div>
<div class="t" style="left:45px;top:207px;width:21px;height:23px;line-height:23px;text-align:center;font-size:11px;color:#222;padding-top:2px">4</div>
<div style="position:absolute;left:66px;top:207px;width:11px;height:23px;background:#17375f"></div>
<div style="position:absolute;left:77px;top:207px;width:10px;height:23px;background:#1d4a80"></div>
<div style="position:absolute;left:87px;top:207px;width:10px;height:23px;background:#23599e"></div>
<div style="position:absolute;left:97px;top:207px;width:723px;height:23px;background:#fff"></div>
<div style="left:97px;top:229px;width:723px;height:1px;background:repeating-linear-gradient(90deg,#bdbdc2 0 3px,transparent 3px 5px)"></div>
<div style="left:211px;top:207px;width:1px;height:23px;background:repeating-linear-gradient(180deg,#bdbdc2 0 3px,transparent 3px 5px)"></div>
<div style="left:557px;top:207px;width:1px;height:23px;background:repeating-linear-gradient(180deg,#bdbdc2 0 3px,transparent 3px 5px)"></div>
<div style="left:691px;top:207px;width:1px;height:23px;background:repeating-linear-gradient(180deg,#bdbdc2 0 3px,transparent 3px 5px)"></div>
<div style="left:819px;top:207px;width:1px;height:23px;background:repeating-linear-gradient(180deg,#bdbdc2 0 3px,transparent 3px 5px)"></div>
<svg class="ic" style="left:99px;top:212px;width:13px;height:13px" viewBox="0 0 13 13"><rect x=".6" y=".6" width="11.8" height="11.8" rx="1.3" fill="none" stroke="#111" stroke-width="1.3"/></svg>
<div class="t" style="left:121px;top:207.5px;width:88px;height:23px;line-height:23px;font-size:12.5px;color:#1c1c1c">01.01</div>
<div class="t" style="left:216px;top:207px;width:340px;height:23px;line-height:23px;font-size:13px;color:#1c1c1c">Вертикальная планировка территории</div>
<div class="t" style="left:557px;top:207px;width:134px;height:23px;line-height:23px;text-align:center;font-size:12.7px;color:#1c1c1c">08.10.2025 09:00</div>
<div class="t" style="left:691px;top:207px;width:129px;height:23px;line-height:23px;text-align:center;font-size:12.7px;color:#1c1c1c">10.10.2025 18:00</div>
<div class="t" style="left:45px;top:230px;width:21px;height:23px;line-height:23px;text-align:center;font-size:11px;color:#222;padding-top:2px">5</div>
<div style="position:absolute;left:66px;top:230px;width:11px;height:23px;background:#17375f"></div>
<div style="position:absolute;left:77px;top:230px;width:10px;height:23px;background:#1d4a80"></div>
<div style="position:absolute;left:87px;top:230px;width:10px;height:23px;background:#23599e"></div>
<div style="position:absolute;left:97px;top:230px;width:723px;height:23px;background:#fff"></div>
<div style="left:97px;top:252px;width:723px;height:1px;background:repeating-linear-gradient(90deg,#bdbdc2 0 3px,transparent 3px 5px)"></div>
<div style="left:211px;top:230px;width:1px;height:23px;background:repeating-linear-gradient(180deg,#bdbdc2 0 3px,transparent 3px 5px)"></div>
<div style="left:557px;top:230px;width:1px;height:23px;background:repeating-linear-gradient(180deg,#bdbdc2 0 3px,transparent 3px 5px)"></div>
<div style="left:691px;top:230px;width:1px;height:23px;background:repeating-linear-gradient(180deg,#bdbdc2 0 3px,transparent 3px 5px)"></div>
<div style="left:819px;top:230px;width:1px;height:23px;background:repeating-linear-gradient(180deg,#bdbdc2 0 3px,transparent 3px 5px)"></div>
<svg class="ic" style="left:99px;top:235px;width:13px;height:13px" viewBox="0 0 13 13"><rect x=".6" y=".6" width="11.8" height="11.8" rx="1.3" fill="none" stroke="#111" stroke-width="1.3"/></svg>
<div class="t" style="left:121px;top:230.5px;width:88px;height:23px;line-height:23px;font-size:12.5px;color:#1c1c1c">01.02</div>
<div class="t" style="left:216px;top:230px;width:340px;height:23px;line-height:23px;font-size:13px;color:#1c1c1c">Устройство котлована</div>
<div class="t" style="left:557px;top:230px;width:134px;height:23px;line-height:23px;text-align:center;font-size:12.7px;color:#1c1c1c">11.10.2025 14:29</div>
<div class="t" style="left:691px;top:230px;width:129px;height:23px;line-height:23px;text-align:center;font-size:12.7px;color:#1c1c1c">12.10.2025 18:00</div>
<div class="t" style="left:45px;top:253px;width:21px;height:23px;line-height:23px;text-align:center;font-size:11px;color:#222;padding-top:2px">6</div>
<div style="position:absolute;left:66px;top:253px;width:11px;height:23px;background:#17375f"></div>
<div style="position:absolute;left:77px;top:253px;width:10px;height:23px;background:#1d4a80"></div>
<div style="position:absolute;left:87px;top:253px;width:10px;height:23px;background:#23599e"></div>
<div style="position:absolute;left:97px;top:253px;width:723px;height:23px;background:#fff"></div>
<div style="left:97px;top:275px;width:723px;height:1px;background:repeating-linear-gradient(90deg,#bdbdc2 0 3px,transparent 3px 5px)"></div>
<div style="left:211px;top:253px;width:1px;height:23px;background:repeating-linear-gradient(180deg,#bdbdc2 0 3px,transparent 3px 5px)"></div>
<div style="left:557px;top:253px;width:1px;height:23px;background:repeating-linear-gradient(180deg,#bdbdc2 0 3px,transparent 3px 5px)"></div>
<div style="left:691px;top:253px;width:1px;height:23px;background:repeating-linear-gradient(180deg,#bdbdc2 0 3px,transparent 3px 5px)"></div>
<div style="left:819px;top:253px;width:1px;height:23px;background:repeating-linear-gradient(180deg,#bdbdc2 0 3px,transparent 3px 5px)"></div>
<svg class="ic" style="left:99px;top:258px;width:13px;height:13px" viewBox="0 0 13 13"><rect x=".6" y=".6" width="11.8" height="11.8" rx="1.3" fill="none" stroke="#111" stroke-width="1.3"/></svg>
<div class="t" style="left:121px;top:253.5px;width:88px;height:23px;line-height:23px;font-size:12.5px;color:#1c1c1c">01.03</div>
<div class="t" style="left:216px;top:253px;width:340px;height:23px;line-height:23px;font-size:13px;color:#1c1c1c">Устройство песчаного основания</div>
<div class="t" style="left:557px;top:253px;width:134px;height:23px;line-height:23px;text-align:center;font-size:12.7px;color:#1c1c1c">13.10.2025 09:00</div>
<div class="t" style="left:691px;top:253px;width:129px;height:23px;line-height:23px;text-align:center;font-size:12.7px;color:#1c1c1c">14.10.2025 18:00</div>
<div class="t" style="left:45px;top:276px;width:21px;height:23px;line-height:23px;text-align:center;font-size:11px;color:#222;padding-top:2px">7</div>
<div style="position:absolute;left:66px;top:276px;width:11px;height:23px;background:#17375f"></div>
<div style="position:absolute;left:77px;top:276px;width:10px;height:23px;background:#1d4a80"></div>
<div style="position:absolute;left:87px;top:276px;width:733px;height:23px;background:#23599e"></div>
<div style="position:absolute;left:88.5px;top:286px;width:8.5px;height:2px;background:#fff"></div>
<svg class="ic" style="left:99px;top:280.5px;width:13px;height:13px" viewBox="0 0 13 13"><rect x=".6" y=".6" width="11.8" height="11.8" rx="1.3" fill="none" stroke="#fff" stroke-width="1"/><path d="M3.3 6.6l2.2 2.2 4.2-4.6" fill="none" stroke="#fff" stroke-width="1.2"/></svg>
<div class="t" style="left:121px;top:276px;width:88px;height:23px;line-height:23px;font-size:12px;font-weight:bold;color:#fff;letter-spacing:-.3px">OP_syn.1.1.2</div>
<div class="t" style="left:216px;top:276px;width:340px;height:23px;line-height:23px;font-size:12px;font-weight:bold;color:#fff;letter-spacing:-.1px">Общестроительные работы</div>
<div class="t" style="left:557px;top:276px;width:134px;height:23px;line-height:23px;text-align:center;font-size:13px;font-weight:bold;color:#fff;letter-spacing:-.2px">15.10.2025 09:00</div>
<div class="t" style="left:691px;top:276px;width:129px;height:23px;line-height:23px;text-align:center;font-size:13px;font-weight:bold;color:#fff;letter-spacing:-.2px">15.01.2026 18:00</div>
<div class="t" style="left:45px;top:299px;width:21px;height:23px;line-height:23px;text-align:center;font-size:11px;color:#222;padding-top:2px">8</div>
<div style="position:absolute;left:66px;top:299px;width:11px;height:23px;background:#17375f"></div>
<div style="position:absolute;left:77px;top:299px;width:10px;height:23px;background:#1d4a80"></div>
<div style="position:absolute;left:87px;top:299px;width:10px;height:23px;background:#23599e"></div>
<div style="position:absolute;left:97px;top:299px;width:723px;height:23px;background:#2a6bb8"></div>
<div style="position:absolute;left:98.5px;top:309px;width:8.5px;height:2px;background:#fff"></div>
<svg class="ic" style="left:109px;top:303.5px;width:13px;height:13px" viewBox="0 0 13 13"><rect x=".6" y=".6" width="11.8" height="11.8" rx="1.3" fill="none" stroke="#fff" stroke-width="1"/><path d="M3.3 6.6l2.2 2.2 4.2-4.6" fill="none" stroke="#fff" stroke-width="1.2"/></svg>
<div class="t" style="left:131px;top:299px;width:78px;height:23px;line-height:23px;font-size:12px;font-weight:bold;color:#fff;letter-spacing:-.3px">OP_syn.1.1....</div>
<div class="t" style="left:216px;top:299px;width:340px;height:23px;line-height:23px;font-size:12px;font-weight:bold;color:#fff;letter-spacing:-.1px">Фундамент</div>
<div class="t" style="left:557px;top:299px;width:134px;height:23px;line-height:23px;text-align:center;font-size:13px;font-weight:bold;color:#fff;letter-spacing:-.2px">15.10.2025 09:00</div>
<div class="t" style="left:691px;top:299px;width:129px;height:23px;line-height:23px;text-align:center;font-size:13px;font-weight:bold;color:#fff;letter-spacing:-.2px">27.10.2025 09:00</div>
<div class="t" style="left:45px;top:322px;width:21px;height:23px;line-height:23px;text-align:center;font-size:11px;color:#222;padding-top:2px">9</div>
<div style="position:absolute;left:66px;top:322px;width:11px;height:23px;background:#17375f"></div>
<div style="position:absolute;left:77px;top:322px;width:10px;height:23px;background:#1d4a80"></div>
<div style="position:absolute;left:87px;top:322px;width:10px;height:23px;background:#23599e"></div>
<div style="position:absolute;left:97px;top:322px;width:10px;height:23px;background:#2a6bb8"></div>
<div style="position:absolute;left:107px;top:322px;width:713px;height:23px;background:#fff"></div>
<div style="left:107px;top:344px;width:713px;height:1px;background:repeating-linear-gradient(90deg,#bdbdc2 0 3px,transparent 3px 5px)"></div>
<div style="left:211px;top:322px;width:1px;height:23px;background:repeating-linear-gradient(180deg,#bdbdc2 0 3px,transparent 3px 5px)"></div>
<div style="left:557px;top:322px;width:1px;height:23px;background:repeating-linear-gradient(180deg,#bdbdc2 0 3px,transparent 3px 5px)"></div>
<div style="left:691px;top:322px;width:1px;height:23px;background:repeating-linear-gradient(180deg,#bdbdc2 0 3px,transparent 3px 5px)"></div>
<div style="left:819px;top:322px;width:1px;height:23px;background:repeating-linear-gradient(180deg,#bdbdc2 0 3px,transparent 3px 5px)"></div>
<svg class="ic" style="left:109px;top:327px;width:13px;height:13px" viewBox="0 0 13 13"><rect x=".6" y=".6" width="11.8" height="11.8" rx="1.3" fill="none" stroke="#111" stroke-width="1.3"/></svg>
<div class="t" style="left:131px;top:322.5px;width:78px;height:23px;line-height:23px;font-size:12.5px;color:#1c1c1c">02.01.01</div>
<div class="t" style="left:216px;top:322px;width:340px;height:23px;line-height:23px;font-size:13px;color:#1c1c1c">Устройство буронабивных свай захватка 1</div>
<div class="t" style="left:557px;top:322px;width:134px;height:23px;line-height:23px;text-align:center;font-size:12.7px;color:#1c1c1c">15.10.2025 09:00</div>
<div class="t" style="left:691px;top:322px;width:129px;height:23px;line-height:23px;text-align:center;font-size:12.7px;color:#1c1c1c">16.10.2025 16:00</div>
<div class="t" style="left:45px;top:345px;width:21px;height:23px;line-height:23px;text-align:center;font-size:11px;color:#222;padding-top:2px">10</div>
<div style="position:absolute;left:66px;top:345px;width:11px;height:23px;background:#17375f"></div>
<div style="position:absolute;left:77px;top:345px;width:10px;height:23px;background:#1d4a80"></div>
<div style="position:absolute;left:87px;top:345px;width:10px;height:23px;background:#23599e"></div>
<div style="position:absolute;left:97px;top:345px;width:10px;height:23px;background:#2a6bb8"></div>
<div style="position:absolute;left:107px;top:345px;width:713px;height:23px;background:#dde9f7"></div>
<div style="left:107px;top:367px;width:713px;height:1px;background:repeating-linear-gradient(90deg,#bdbdc2 0 3px,transparent 3px 5px)"></div>
<div style="left:211px;top:345px;width:1px;height:23px;background:repeating-linear-gradient(180deg,#bdbdc2 0 3px,transparent 3px 5px)"></div>
<div style="left:557px;top:345px;width:1px;height:23px;background:repeating-linear-gradient(180deg,#bdbdc2 0 3px,transparent 3px 5px)"></div>
<div style="left:691px;top:345px;width:1px;height:23px;background:repeating-linear-gradient(180deg,#bdbdc2 0 3px,transparent 3px 5px)"></div>
<div style="left:819px;top:345px;width:1px;height:23px;background:repeating-linear-gradient(180deg,#bdbdc2 0 3px,transparent 3px 5px)"></div>
<svg class="ic" style="left:109px;top:350px;width:13px;height:13px" viewBox="0 0 13 13"><rect x=".5" y=".5" width="12" height="12" rx="1.5" fill="#111"/><path d="M3 6.5l2.5 2.5 4.5-5" fill="none" stroke="#fff" stroke-width="1.6"/></svg>
<div class="t" style="left:131px;top:345.5px;width:78px;height:23px;line-height:23px;font-size:12.5px;color:#1c1c1c">02.01.02</div>
<div class="t" style="left:216px;top:345px;width:340px;height:23px;line-height:23px;font-size:13px;color:#1c1c1c">Устройство буронабивных свай захватка 2</div>
<div class="t" style="left:557px;top:345px;width:134px;height:23px;line-height:23px;text-align:center;font-size:12.7px;color:#1c1c1c">17.10.2025 09:00</div>
<div class="t" style="left:691px;top:345px;width:129px;height:23px;line-height:23px;text-align:center;font-size:12.7px;color:#1c1c1c">22.10.2025 09:00</div>
<div class="t" style="left:45px;top:368px;width:21px;height:23px;line-height:23px;text-align:center;font-size:11px;color:#222;padding-top:2px">11</div>
<div style="position:absolute;left:66px;top:368px;width:11px;height:23px;background:#17375f"></div>
<div style="position:absolute;left:77px;top:368px;width:10px;height:23px;background:#1d4a80"></div>
<div style="position:absolute;left:87px;top:368px;width:10px;height:23px;background:#23599e"></div>
<div style="position:absolute;left:97px;top:368px;width:10px;height:23px;background:#2a6bb8"></div>
<div style="position:absolute;left:107px;top:368px;width:713px;height:23px;background:#fff"></div>
<div style="left:107px;top:390px;width:713px;height:1px;background:repeating-linear-gradient(90deg,#bdbdc2 0 3px,transparent 3px 5px)"></div>
<div style="left:211px;top:368px;width:1px;height:23px;background:repeating-linear-gradient(180deg,#bdbdc2 0 3px,transparent 3px 5px)"></div>
<div style="left:557px;top:368px;width:1px;height:23px;background:repeating-linear-gradient(180deg,#bdbdc2 0 3px,transparent 3px 5px)"></div>
<div style="left:691px;top:368px;width:1px;height:23px;background:repeating-linear-gradient(180deg,#bdbdc2 0 3px,transparent 3px 5px)"></div>
<div style="left:819px;top:368px;width:1px;height:23px;background:repeating-linear-gradient(180deg,#bdbdc2 0 3px,transparent 3px 5px)"></div>
<svg class="ic" style="left:109px;top:373px;width:13px;height:13px" viewBox="0 0 13 13"><rect x=".6" y=".6" width="11.8" height="11.8" rx="1.3" fill="none" stroke="#111" stroke-width="1.3"/></svg>
<div class="t" style="left:131px;top:368.5px;width:78px;height:23px;line-height:23px;font-size:12.5px;color:#1c1c1c">02.01.03</div>
<div class="t" style="left:216px;top:368px;width:340px;height:23px;line-height:23px;font-size:13px;color:#1c1c1c">Устройство буронабивных свай захватка 3</div>
<div class="t" style="left:557px;top:368px;width:134px;height:23px;line-height:23px;text-align:center;font-size:12.7px;color:#1c1c1c">19.10.2025 09:00</div>
<div class="t" style="left:691px;top:368px;width:129px;height:23px;line-height:23px;text-align:center;font-size:12.7px;color:#1c1c1c">20.10.2025 16:00</div>
<div class="t" style="left:45px;top:391px;width:21px;height:23px;line-height:23px;text-align:center;font-size:11px;color:#222;padding-top:2px">12</div>
<div style="position:absolute;left:66px;top:391px;width:11px;height:23px;background:#17375f"></div>
<div style="position:absolute;left:77px;top:391px;width:10px;height:23px;background:#1d4a80"></div>
<div style="position:absolute;left:87px;top:391px;width:10px;height:23px;background:#23599e"></div>
<div style="position:absolute;left:97px;top:391px;width:10px;height:23px;background:#2a6bb8"></div>
<div style="position:absolute;left:107px;top:391px;width:713px;height:23px;background:#fff"></div>
<div style="left:107px;top:413px;width:713px;height:1px;background:repeating-linear-gradient(90deg,#bdbdc2 0 3px,transparent 3px 5px)"></div>
<div style="left:211px;top:391px;width:1px;height:23px;background:repeating-linear-gradient(180deg,#bdbdc2 0 3px,transparent 3px 5px)"></div>
<div style="left:557px;top:391px;width:1px;height:23px;background:repeating-linear-gradient(180deg,#bdbdc2 0 3px,transparent 3px 5px)"></div>
<div style="left:691px;top:391px;width:1px;height:23px;background:repeating-linear-gradient(180deg,#bdbdc2 0 3px,transparent 3px 5px)"></div>
<div style="left:819px;top:391px;width:1px;height:23px;background:repeating-linear-gradient(180deg,#bdbdc2 0 3px,transparent 3px 5px)"></div>
<svg class="ic" style="left:109px;top:396px;width:13px;height:13px" viewBox="0 0 13 13"><rect x=".6" y=".6" width="11.8" height="11.8" rx="1.3" fill="none" stroke="#111" stroke-width="1.3"/></svg>
<div class="t" style="left:131px;top:391.5px;width:78px;height:23px;line-height:23px;font-size:12.5px;color:#1c1c1c">02.01.04</div>
<div class="t" style="left:216px;top:391px;width:340px;height:23px;line-height:23px;font-size:13px;color:#1c1c1c">Устройство буронабивных свай захватка 4</div>
<div class="t" style="left:557px;top:391px;width:134px;height:23px;line-height:23px;text-align:center;font-size:12.7px;color:#1c1c1c">21.10.2025 09:00</div>
<div class="t" style="left:691px;top:391px;width:129px;height:23px;line-height:23px;text-align:center;font-size:12.7px;color:#1c1c1c">22.10.2025 16:00</div>
<div class="t" style="left:45px;top:414px;width:21px;height:23px;line-height:23px;text-align:center;font-size:11px;color:#222;padding-top:2px">13</div>
<div style="position:absolute;left:66px;top:414px;width:11px;height:23px;background:#17375f"></div>
<div style="position:absolute;left:77px;top:414px;width:10px;height:23px;background:#1d4a80"></div>
<div style="position:absolute;left:87px;top:414px;width:10px;height:23px;background:#23599e"></div>
<div style="position:absolute;left:97px;top:414px;width:10px;height:23px;background:#2a6bb8"></div>
<div style="position:absolute;left:107px;top:414px;width:713px;height:23px;background:#fff"></div>
<div style="left:107px;top:436px;width:713px;height:1px;background:repeating-linear-gradient(90deg,#bdbdc2 0 3px,transparent 3px 5px)"></div>
<div style="left:211px;top:414px;width:1px;height:23px;background:repeating-linear-gradient(180deg,#bdbdc2 0 3px,transparent 3px 5px)"></div>
<div style="left:557px;top:414px;width:1px;height:23px;background:repeating-linear-gradient(180deg,#bdbdc2 0 3px,transparent 3px 5px)"></div>
<div style="left:691px;top:414px;width:1px;height:23px;background:repeating-linear-gradient(180deg,#bdbdc2 0 3px,transparent 3px 5px)"></div>
<div style="left:819px;top:414px;width:1px;height:23px;background:repeating-linear-gradient(180deg,#bdbdc2 0 3px,transparent 3px 5px)"></div>
<svg class="ic" style="left:109px;top:419px;width:13px;height:13px" viewBox="0 0 13 13"><rect x=".6" y=".6" width="11.8" height="11.8" rx="1.3" fill="none" stroke="#111" stroke-width="1.3"/></svg>
<div class="t" style="left:131px;top:414.5px;width:78px;height:23px;line-height:23px;font-size:12.5px;color:#1c1c1c">02.01.05</div>
<div class="t" style="left:216px;top:414px;width:340px;height:23px;line-height:23px;font-size:13px;color:#1c1c1c">Устройство фундаментной плиты</div>
<div class="t" style="left:557px;top:414px;width:134px;height:23px;line-height:23px;text-align:center;font-size:12.7px;color:#1c1c1c">23.10.2025 09:00</div>
<div class="t" style="left:691px;top:414px;width:129px;height:23px;line-height:23px;text-align:center;font-size:12.7px;color:#1c1c1c">27.10.2025 09:00</div>
<div class="t" style="left:45px;top:437px;width:21px;height:23px;line-height:23px;text-align:center;font-size:11px;color:#222;padding-top:2px">14</div>
<div style="position:absolute;left:66px;top:437px;width:11px;height:23px;background:#17375f"></div>
<div style="position:absolute;left:77px;top:437px;width:10px;height:23px;background:#1d4a80"></div>
<div style="position:absolute;left:87px;top:437px;width:10px;height:23px;background:#23599e"></div>
<div style="position:absolute;left:97px;top:437px;width:723px;height:23px;background:#2a6bb8"></div>
<div style="position:absolute;left:98.5px;top:447px;width:8.5px;height:2px;background:#fff"></div>
<svg class="ic" style="left:109px;top:441.5px;width:13px;height:13px" viewBox="0 0 13 13"><rect x=".6" y=".6" width="11.8" height="11.8" rx="1.3" fill="none" stroke="#fff" stroke-width="1"/></svg>
<div class="t" style="left:131px;top:437px;width:78px;height:23px;line-height:23px;font-size:12px;font-weight:bold;color:#fff;letter-spacing:-.3px">OP_syn.1.1....</div>
<div class="t" style="left:216px;top:437px;width:340px;height:23px;line-height:23px;font-size:12px;font-weight:bold;color:#fff;letter-spacing:-.1px">Монолитные работы подземной части</div>
<div class="t" style="left:557px;top:437px;width:134px;height:23px;line-height:23px;text-align:center;font-size:13px;font-weight:bold;color:#fff;letter-spacing:-.2px">28.10.2025 09:00</div>
<div class="t" style="left:691px;top:437px;width:129px;height:23px;line-height:23px;text-align:center;font-size:13px;font-weight:bold;color:#fff;letter-spacing:-.2px">07.11.2025 18:00</div>
<div class="t" style="left:45px;top:460px;width:21px;height:23px;line-height:23px;text-align:center;font-size:11px;color:#222;padding-top:2px">15</div>
<div style="position:absolute;left:66px;top:460px;width:11px;height:23px;background:#17375f"></div>
<div style="position:absolute;left:77px;top:460px;width:10px;height:23px;background:#1d4a80"></div>
<div style="position:absolute;left:87px;top:460px;width:10px;height:23px;background:#23599e"></div>
<div style="position:absolute;left:97px;top:460px;width:10px;height:23px;background:#2a6bb8"></div>
<div style="position:absolute;left:107px;top:460px;width:713px;height:23px;background:#fff"></div>
<div style="left:107px;top:482px;width:713px;height:1px;background:repeating-linear-gradient(90deg,#bdbdc2 0 3px,transparent 3px 5px)"></div>
<div style="left:211px;top:460px;width:1px;height:23px;background:repeating-linear-gradient(180deg,#bdbdc2 0 3px,transparent 3px 5px)"></div>
<div style="left:557px;top:460px;width:1px;height:23px;background:repeating-linear-gradient(180deg,#bdbdc2 0 3px,transparent 3px 5px)"></div>
<div style="left:691px;top:460px;width:1px;height:23px;background:repeating-linear-gradient(180deg,#bdbdc2 0 3px,transparent 3px 5px)"></div>
<div style="left:819px;top:460px;width:1px;height:23px;background:repeating-linear-gradient(180deg,#bdbdc2 0 3px,transparent 3px 5px)"></div>
<svg class="ic" style="left:109px;top:465px;width:13px;height:13px" viewBox="0 0 13 13"><rect x=".6" y=".6" width="11.8" height="11.8" rx="1.3" fill="none" stroke="#111" stroke-width="1.3"/></svg>
<div class="t" style="left:131px;top:460.5px;width:78px;height:23px;line-height:23px;font-size:12.5px;color:#1c1c1c">02.02.01</div>
<div class="t" style="left:216px;top:460px;width:340px;height:23px;line-height:23px;font-size:13px;color:#1c1c1c">Устройство монолитных стен цокольного этажа</div>
<div class="t" style="left:557px;top:460px;width:134px;height:23px;line-height:23px;text-align:center;font-size:12.7px;color:#1c1c1c">28.10.2025 09:00</div>
<div class="t" style="left:691px;top:460px;width:129px;height:23px;line-height:23px;text-align:center;font-size:12.7px;color:#1c1c1c">29.10.2025 18:00</div>
<div class="t" style="left:45px;top:483px;width:21px;height:23px;line-height:23px;text-align:center;font-size:11px;color:#222;padding-top:2px">16</div>
<div style="position:absolute;left:66px;top:483px;width:11px;height:23px;background:#17375f"></div>
<div style="position:absolute;left:77px;top:483px;width:10px;height:23px;background:#1d4a80"></div>
<div style="position:absolute;left:87px;top:483px;width:10px;height:23px;background:#23599e"></div>
<div style="position:absolute;left:97px;top:483px;width:10px;height:23px;background:#2a6bb8"></div>
<div style="position:absolute;left:107px;top:483px;width:713px;height:23px;background:#fff"></div>
<div style="left:107px;top:505px;width:713px;height:1px;background:repeating-linear-gradient(90deg,#bdbdc2 0 3px,transparent 3px 5px)"></div>
<div style="left:211px;top:483px;width:1px;height:23px;background:repeating-linear-gradient(180deg,#bdbdc2 0 3px,transparent 3px 5px)"></div>
<div style="left:557px;top:483px;width:1px;height:23px;background:repeating-linear-gradient(180deg,#bdbdc2 0 3px,transparent 3px 5px)"></div>
<div style="left:691px;top:483px;width:1px;height:23px;background:repeating-linear-gradient(180deg,#bdbdc2 0 3px,transparent 3px 5px)"></div>
<div style="left:819px;top:483px;width:1px;height:23px;background:repeating-linear-gradient(180deg,#bdbdc2 0 3px,transparent 3px 5px)"></div>
<svg class="ic" style="left:109px;top:488px;width:13px;height:13px" viewBox="0 0 13 13"><rect x=".6" y=".6" width="11.8" height="11.8" rx="1.3" fill="none" stroke="#111" stroke-width="1.3"/></svg>
<div class="t" style="left:131px;top:483.5px;width:78px;height:23px;line-height:23px;font-size:12.5px;color:#1c1c1c">02.02.02</div>
<div class="t" style="left:216px;top:483px;width:340px;height:23px;line-height:23px;font-size:13px;color:#1c1c1c">Устройство монолитного перекрытия цокольного этажа</div>
<div class="t" style="left:557px;top:483px;width:134px;height:23px;line-height:23px;text-align:center;font-size:12.7px;color:#1c1c1c">30.10.2025 09:00</div>
<div class="t" style="left:691px;top:483px;width:129px;height:23px;line-height:23px;text-align:center;font-size:12.7px;color:#1c1c1c">03.11.2025 18:00</div>
<div class="t" style="left:45px;top:506px;width:21px;height:23px;line-height:23px;text-align:center;font-size:11px;color:#222;padding-top:2px">17</div>
<div style="position:absolute;left:66px;top:506px;width:11px;height:23px;background:#17375f"></div>
<div style="position:absolute;left:77px;top:506px;width:10px;height:23px;background:#1d4a80"></div>
<div style="position:absolute;left:87px;top:506px;width:10px;height:23px;background:#23599e"></div>
<div style="position:absolute;left:97px;top:506px;width:10px;height:23px;background:#2a6bb8"></div>
<div style="position:absolute;left:107px;top:506px;width:713px;height:23px;background:#fff"></div>
<div style="left:107px;top:528px;width:713px;height:1px;background:repeating-linear-gradient(90deg,#bdbdc2 0 3px,transparent 3px 5px)"></div>
<div style="left:211px;top:506px;width:1px;height:23px;background:repeating-linear-gradient(180deg,#bdbdc2 0 3px,transparent 3px 5px)"></div>
<div style="left:557px;top:506px;width:1px;height:23px;background:repeating-linear-gradient(180deg,#bdbdc2 0 3px,transparent 3px 5px)"></div>
<div style="left:691px;top:506px;width:1px;height:23px;background:repeating-linear-gradient(180deg,#bdbdc2 0 3px,transparent 3px 5px)"></div>
<div style="left:819px;top:506px;width:1px;height:23px;background:repeating-linear-gradient(180deg,#bdbdc2 0 3px,transparent 3px 5px)"></div>
<svg class="ic" style="left:109px;top:511px;width:13px;height:13px" viewBox="0 0 13 13"><rect x=".6" y=".6" width="11.8" height="11.8" rx="1.3" fill="none" stroke="#111" stroke-width="1.3"/></svg>
<div class="t" style="left:131px;top:506.5px;width:78px;height:23px;line-height:23px;font-size:12.5px;color:#1c1c1c">02.02.03</div>
<div class="t" style="left:216px;top:506px;width:340px;height:23px;line-height:23px;font-size:13px;color:#1c1c1c">Устройство монолитной входной лестницы</div>
<div class="t" style="left:557px;top:506px;width:134px;height:23px;line-height:23px;text-align:center;font-size:12.7px;color:#1c1c1c">06.11.2025 09:00</div>
<div class="t" style="left:691px;top:506px;width:129px;height:23px;line-height:23px;text-align:center;font-size:12.7px;color:#1c1c1c">07.11.2025 18:00</div>
<div class="t" style="left:45px;top:529px;width:21px;height:23px;line-height:23px;text-align:center;font-size:11px;color:#222;padding-top:2px">18</div>
<div style="position:absolute;left:66px;top:529px;width:11px;height:23px;background:#17375f"></div>
<div style="position:absolute;left:77px;top:529px;width:10px;height:23px;background:#1d4a80"></div>
<div style="position:absolute;left:87px;top:529px;width:10px;height:23px;background:#23599e"></div>
<div style="position:absolute;left:97px;top:529px;width:723px;height:23px;background:#2a6bb8"></div>
<div style="position:absolute;left:98.5px;top:539px;width:8.5px;height:2px;background:#fff"></div>
<svg class="ic" style="left:109px;top:533.5px;width:13px;height:13px" viewBox="0 0 13 13"><rect x=".6" y=".6" width="11.8" height="11.8" rx="1.3" fill="none" stroke="#fff" stroke-width="1"/></svg>
<div class="t" style="left:131px;top:529px;width:78px;height:23px;line-height:23px;font-size:12px;font-weight:bold;color:#fff;letter-spacing:-.3px">OP_syn.1.1....</div>
<div class="t" style="left:216px;top:529px;width:340px;height:23px;line-height:23px;font-size:12px;font-weight:bold;color:#fff;letter-spacing:-.1px">Монолитные работы надземной части</div>
<div class="t" style="left:557px;top:529px;width:134px;height:23px;line-height:23px;text-align:center;font-size:13px;font-weight:bold;color:#fff;letter-spacing:-.2px">04.11.2025 09:00</div>
<div class="t" style="left:691px;top:529px;width:129px;height:23px;line-height:23px;text-align:center;font-size:13px;font-weight:bold;color:#fff;letter-spacing:-.2px">30.11.2025 18:00</div>
<div class="t" style="left:45px;top:552px;width:21px;height:23px;line-height:23px;text-align:center;font-size:11px;color:#222;padding-top:2px">19</div>
<div style="position:absolute;left:66px;top:552px;width:11px;height:23px;background:#17375f"></div>
<div style="position:absolute;left:77px;top:552px;width:10px;height:23px;background:#1d4a80"></div>
<div style="position:absolute;left:87px;top:552px;width:10px;height:23px;background:#23599e"></div>
<div style="position:absolute;left:97px;top:552px;width:10px;height:23px;background:#2a6bb8"></div>
<div style="position:absolute;left:107px;top:552px;width:713px;height:23px;background:#fff"></div>
<div style="left:107px;top:574px;width:713px;height:1px;background:repeating-linear-gradient(90deg,#bdbdc2 0 3px,transparent 3px 5px)"></div>
<div style="left:211px;top:552px;width:1px;height:23px;background:repeating-linear-gradient(180deg,#bdbdc2 0 3px,transparent 3px 5px)"></div>
<div style="left:557px;top:552px;width:1px;height:23px;background:repeating-linear-gradient(180deg,#bdbdc2 0 3px,transparent 3px 5px)"></div>
<div style="left:691px;top:552px;width:1px;height:23px;background:repeating-linear-gradient(180deg,#bdbdc2 0 3px,transparent 3px 5px)"></div>
<div style="left:819px;top:552px;width:1px;height:23px;background:repeating-linear-gradient(180deg,#bdbdc2 0 3px,transparent 3px 5px)"></div>
<svg class="ic" style="left:109px;top:557px;width:13px;height:13px" viewBox="0 0 13 13"><rect x=".6" y=".6" width="11.8" height="11.8" rx="1.3" fill="none" stroke="#111" stroke-width="1.3"/></svg>
<div class="t" style="left:131px;top:552.5px;width:78px;height:23px;line-height:23px;font-size:12.5px;color:#1c1c1c">02.03.01</div>
<div class="t" style="left:216px;top:552px;width:340px;height:23px;line-height:23px;font-size:13px;color:#1c1c1c">Устройство наружных монолитных стен 1-го этажа</div>
<div class="t" style="left:557px;top:552px;width:134px;height:23px;line-height:23px;text-align:center;font-size:12.7px;color:#1c1c1c">04.11.2025 09:00</div>
<div class="t" style="left:691px;top:552px;width:129px;height:23px;line-height:23px;text-align:center;font-size:12.7px;color:#1c1c1c">05.11.2025 11:00</div>
<div style="position:absolute;left:820px;top:88px;width:12px;height:488px;background:#f2f2f4"></div>
<div style="position:absolute;left:820.5px;top:88.5px;width:11px;height:49px;background:#dcdcdf;border-radius:3px"></div>
<div style="position:absolute;left:45px;top:575px;width:787px;height:15px;background:#f2f2f4"></div>
<div style="position:absolute;left:46px;top:577.5px;width:697px;height:11.5px;background:#dcdcdf;border-radius:6px"></div>
<div style="position:absolute;left:832px;top:43px;width:6px;height:547px;background:#b4b4ba"></div>
<div style="position:absolute;left:45px;top:590px;width:1873px;height:6px;background:#b4b4ba"></div>
<div style="position:absolute;left:838px;top:88px;width:1080px;height:488px;background:#fff"></div>
<div style="position:absolute;left:838px;top:112px;width:1072px;height:1px;background:#c6c6cc"></div>
<div style="position:absolute;left:838px;top:137px;width:1072px;height:1px;background:#c6c6cc"></div>
<div class="t" style="left:838px;top:88.5px;width:270px;height:24px;line-height:24px;text-align:center;font-size:11px;color:#1c1c1c">17.10.2025</div>
<div class="t" style="left:838px;top:114px;width:90px;height:24px;line-height:24px;text-align:center;font-size:11.5px;color:#1c1c1c">Согл.план</div>
<div class="t" style="left:928px;top:114px;width:90px;height:24px;line-height:24px;text-align:center;font-size:11.5px;color:#1c1c1c">Опер.план</div>
<div style="left:927px;top:113px;width:1px;height:24px;background:repeating-linear-gradient(180deg,#bdbdc2 0 3px,transparent 3px 5px)"></div>
<div class="t" style="left:1018px;top:114px;width:90px;height:24px;line-height:24px;text-align:center;font-size:11.5px;color:#1c1c1c">Факт</div>
<div style="left:1017px;top:113px;width:1px;height:24px;background:repeating-linear-gradient(180deg,#bdbdc2 0 3px,transparent 3px 5px)"></div>
<div class="t" style="left:1108px;top:88.5px;width:270px;height:24px;line-height:24px;text-align:center;font-size:11px;color:#1c1c1c">18.10.2025</div>
<div class="t" style="left:1108px;top:114px;width:90px;height:24px;line-height:24px;text-align:center;font-size:11.5px;color:#1c1c1c">Согл.план</div>
<div class="t" style="left:1198px;top:114px;width:90px;height:24px;line-height:24px;text-align:center;font-size:11.5px;color:#1c1c1c">Опер.план</div>
<div style="left:1197px;top:113px;width:1px;height:24px;background:repeating-linear-gradient(180deg,#bdbdc2 0 3px,transparent 3px 5px)"></div>
<div class="t" style="left:1288px;top:114px;width:90px;height:24px;line-height:24px;text-align:center;font-size:11.5px;color:#1c1c1c">Факт</div>
<div style="left:1287px;top:113px;width:1px;height:24px;background:repeating-linear-gradient(180deg,#bdbdc2 0 3px,transparent 3px 5px)"></div>
<div style="position:absolute;left:1107px;top:88px;width:1px;height:50px;background:#c6c6cc"></div>
<div class="t" style="left:1378px;top:88.5px;width:270px;height:24px;line-height:24px;text-align:center;font-size:11px;color:#1c1c1c">19.10.2025</div>
<div class="t" style="left:1378px;top:114px;width:90px;height:24px;line-height:24px;text-align:center;font-size:11.5px;color:#1c1c1c">Согл.план</div>
<div class="t" style="left:1468px;top:114px;width:90px;height:24px;line-height:24px;text-align:center;font-size:11.5px;color:#1c1c1c">Опер.план</div>
<div style="left:1467px;top:113px;width:1px;height:24px;background:repeating-linear-gradient(180deg,#bdbdc2 0 3px,transparent 3px 5px)"></div>
<div class="t" style="left:1558px;top:114px;width:90px;height:24px;line-height:24px;text-align:center;font-size:11.5px;color:#1c1c1c">Факт</div>
<div style="left:1557px;top:113px;width:1px;height:24px;background:repeating-linear-gradient(180deg,#bdbdc2 0 3px,transparent 3px 5px)"></div>
<div style="position:absolute;left:1377px;top:88px;width:1px;height:50px;background:#c6c6cc"></div>
<div style="position:absolute;left:1647px;top:88px;width:1px;height:50px;background:#c6c6cc"></div>
<div style="position:absolute;left:1668px;top:88px;width:1px;height:50px;background:#c6c6cc"></div>
<div class="t" style="left:1669px;top:89px;width:240px;height:24px;line-height:24px;text-align:center;font-size:11.5px;color:#1c1c1c">Суммарно</div>
<svg class="ic" style="left:1686px;top:91px;width:14px;height:20px" viewBox="0 0 14 20" fill="none" stroke="#3a3a3e" stroke-width="1.7"><path d="M12 1L3 10l9 9"/></svg>
<svg class="ic" style="left:1879px;top:91px;width:14px;height:20px" viewBox="0 0 14 20" fill="none" stroke="#3a3a3e" stroke-width="1.7"><path d="M2 1l9 9-9 9"/></svg>
<div class="t" style="left:1669px;top:114px;width:80px;height:24px;line-height:24px;text-align:center;font-size:11.5px;color:#1c1c1c">Согл.план</div>
<div class="t" style="left:1749px;top:114px;width:80px;height:24px;line-height:24px;text-align:center;font-size:11.5px;color:#1c1c1c">Опер.план</div>
<div style="left:1748px;top:113px;width:1px;height:24px;background:repeating-linear-gradient(180deg,#bdbdc2 0 3px,transparent 3px 5px)"></div>
<div class="t" style="left:1829px;top:114px;width:80px;height:24px;line-height:24px;text-align:center;font-size:11.5px;color:#1c1c1c">Факт</div>
<div style="left:1828px;top:113px;width:1px;height:24px;background:repeating-linear-gradient(180deg,#bdbdc2 0 3px,transparent 3px 5px)"></div>
<div style="position:absolute;left:1909px;top:88px;width:1px;height:50px;background:#c6c6cc"></div>
<div style="position:absolute;left:838px;top:138px;width:1072px;height:23px;background:#17375f"></div>
<div style="position:absolute;left:1668px;top:138px;width:1px;height:23px;background:rgba(255,255,255,.35)"></div>
<div class="t" style="left:838px;top:138px;width:90px;height:19px;line-height:19px;text-align:center;font-size:12px;color:#fff">5</div>
<div class="t" style="left:928px;top:138px;width:90px;height:19px;line-height:19px;text-align:center;font-size:12px;color:#fff">5</div>
<div class="t" style="left:1018px;top:138px;width:90px;height:19px;line-height:19px;text-align:center;font-size:12px;color:#3fcf6b">5</div>
<div class="t" style="left:1108px;top:138px;width:90px;height:19px;line-height:19px;text-align:center;font-size:12px;color:#fff">5</div>
<div class="t" style="left:1198px;top:138px;width:90px;height:19px;line-height:19px;text-align:center;font-size:12px;color:#fff">5</div>
<div class="t" style="left:1288px;top:138px;width:90px;height:19px;line-height:19px;text-align:center;font-size:12px;color:#3fcf6b">5</div>
<div class="t" style="left:1378px;top:138px;width:90px;height:19px;line-height:19px;text-align:center;font-size:12px;color:#fff">5</div>
<div class="t" style="left:1468px;top:138px;width:90px;height:19px;line-height:19px;text-align:center;font-size:12px;color:#fff">5</div>
<div class="t" style="left:1558px;top:138px;width:90px;height:19px;line-height:19px;text-align:center;font-size:12px;color:#3fcf6b">5</div>
<div class="t" style="left:1669px;top:138px;width:80px;height:21px;line-height:21px;text-align:center;font-size:12px;color:#fff">2 492</div>
<div class="t" style="left:1749px;top:138px;width:80px;height:21px;line-height:21px;text-align:center;font-size:12px;color:#fff">2 492</div>
<div class="t" style="left:1829px;top:138px;width:80px;height:21px;line-height:21px;text-align:center;font-size:12px;color:#fff">2 492</div>
<div style="position:absolute;left:838px;top:161px;width:1072px;height:23px;background:#1d4a80"></div>
<div style="position:absolute;left:1668px;top:161px;width:1px;height:23px;background:rgba(255,255,255,.35)"></div>
<div class="t" style="left:838px;top:161px;width:90px;height:19px;line-height:19px;text-align:center;font-size:12px;color:#fff">5</div>
<div class="t" style="left:928px;top:161px;width:90px;height:19px;line-height:19px;text-align:center;font-size:12px;color:#fff">5</div>
<div class="t" style="left:1018px;top:161px;width:90px;height:19px;line-height:19px;text-align:center;font-size:12px;color:#3fcf6b">5</div>
<div class="t" style="left:1108px;top:161px;width:90px;height:19px;line-height:19px;text-align:center;font-size:12px;color:#fff">5</div>
<div class="t" style="left:1198px;top:161px;width:90px;height:19px;line-height:19px;text-align:center;font-size:12px;color:#fff">5</div>
<div class="t" style="left:1288px;top:161px;width:90px;height:19px;line-height:19px;text-align:center;font-size:12px;color:#3fcf6b">5</div>
<div class="t" style="left:1378px;top:161px;width:90px;height:19px;line-height:19px;text-align:center;font-size:12px;color:#fff">5</div>
<div class="t" style="left:1468px;top:161px;width:90px;height:19px;line-height:19px;text-align:center;font-size:12px;color:#fff">5</div>
<div class="t" style="left:1558px;top:161px;width:90px;height:19px;line-height:19px;text-align:center;font-size:12px;color:#3fcf6b">5</div>
<div class="t" style="left:1669px;top:161px;width:80px;height:21px;line-height:21px;text-align:center;font-size:12px;color:#fff">2 492</div>
<div class="t" style="left:1749px;top:161px;width:80px;height:21px;line-height:21px;text-align:center;font-size:12px;color:#fff">2 492</div>
<div class="t" style="left:1829px;top:161px;width:80px;height:21px;line-height:21px;text-align:center;font-size:12px;color:#fff">2 492</div>
<div style="position:absolute;left:838px;top:184px;width:1072px;height:23px;background:#23599e"></div>
<div style="position:absolute;left:1668px;top:184px;width:1px;height:23px;background:rgba(255,255,255,.35)"></div>
<div class="t" style="left:1669px;top:184px;width:80px;height:21px;line-height:21px;text-align:center;font-size:12px;color:#fff">909</div>
<div class="t" style="left:1749px;top:184px;width:80px;height:21px;line-height:21px;text-align:center;font-size:12px;color:#fff">909</div>
<div class="t" style="left:1829px;top:184px;width:80px;height:21px;line-height:21px;text-align:center;font-size:12px;color:#fff">909</div>
<div style="position:absolute;left:838px;top:207px;width:1072px;height:23px;background:#fff"></div>
<div style="position:absolute;left:1669px;top:207px;width:241px;height:23px;background:#f3f3f5"></div>
<div style="left:838px;top:229px;width:1072px;height:1px;background:repeating-linear-gradient(90deg,#bdbdc2 0 3px,transparent 3px 5px)"></div>
<div style="left:927px;top:207px;width:1px;height:23px;background:repeating-linear-gradient(180deg,#bdbdc2 0 3px,transparent 3px 5px)"></div>
<div style="left:1017px;top:207px;width:1px;height:23px;background:repeating-linear-gradient(180deg,#bdbdc2 0 3px,transparent 3px 5px)"></div>
<div style="position:absolute;left:1107px;top:207px;width:1px;height:23px;background:#c6c6cc"></div>
<div style="left:1197px;top:207px;width:1px;height:23px;background:repeating-linear-gradient(180deg,#bdbdc2 0 3px,transparent 3px 5px)"></div>
<div style="left:1287px;top:207px;width:1px;height:23px;background:repeating-linear-gradient(180deg,#bdbdc2 0 3px,transparent 3px 5px)"></div>
<div style="position:absolute;left:1377px;top:207px;width:1px;height:23px;background:#c6c6cc"></div>
<div style="left:1467px;top:207px;width:1px;height:23px;background:repeating-linear-gradient(180deg,#bdbdc2 0 3px,transparent 3px 5px)"></div>
<div style="left:1557px;top:207px;width:1px;height:23px;background:repeating-linear-gradient(180deg,#bdbdc2 0 3px,transparent 3px 5px)"></div>
<div style="position:absolute;left:1647px;top:207px;width:1px;height:23px;background:#c6c6cc"></div>
<div style="position:absolute;left:1668px;top:207px;width:1px;height:23px;background:#c6c6cc"></div>
<div style="left:1748px;top:207px;width:1px;height:23px;background:repeating-linear-gradient(180deg,#bdbdc2 0 3px,transparent 3px 5px)"></div>
<div style="left:1828px;top:207px;width:1px;height:23px;background:repeating-linear-gradient(180deg,#bdbdc2 0 3px,transparent 3px 5px)"></div>
<div style="left:1909px;top:207px;width:1px;height:23px;background:repeating-linear-gradient(180deg,#bdbdc2 0 3px,transparent 3px 5px)"></div>
<div class="t" style="left:1669px;top:207px;width:80px;height:21px;line-height:21px;text-align:center;font-size:12px;color:#1c1c1c">134</div>
<div class="t" style="left:1749px;top:207px;width:80px;height:21px;line-height:21px;text-align:center;font-size:12px;color:#1c1c1c">134</div>
<div class="t" style="left:1829px;top:207px;width:80px;height:21px;line-height:21px;text-align:center;font-size:12px;color:#1c1c1c">134</div>
<div style="position:absolute;left:838px;top:230px;width:1072px;height:23px;background:#fff"></div>
<div style="position:absolute;left:1669px;top:230px;width:241px;height:23px;background:#f3f3f5"></div>
<div style="left:838px;top:252px;width:1072px;height:1px;background:repeating-linear-gradient(90deg,#bdbdc2 0 3px,transparent 3px 5px)"></div>
<div style="left:927px;top:230px;width:1px;height:23px;background:repeating-linear-gradient(180deg,#bdbdc2 0 3px,transparent 3px 5px)"></div>
<div style="left:1017px;top:230px;width:1px;height:23px;background:repeating-linear-gradient(180deg,#bdbdc2 0 3px,transparent 3px 5px)"></div>
<div style="position:absolute;left:1107px;top:230px;width:1px;height:23px;background:#c6c6cc"></div>
<div style="left:1197px;top:230px;width:1px;height:23px;background:repeating-linear-gradient(180deg,#bdbdc2 0 3px,transparent 3px 5px)"></div>
<div style="left:1287px;top:230px;width:1px;height:23px;background:repeating-linear-gradient(180deg,#bdbdc2 0 3px,transparent 3px 5px)"></div>
<div style="position:absolute;left:1377px;top:230px;width:1px;height:23px;background:#c6c6cc"></div>
<div style="left:1467px;top:230px;width:1px;height:23px;background:repeating-linear-gradient(180deg,#bdbdc2 0 3px,transparent 3px 5px)"></div>
<div style="left:1557px;top:230px;width:1px;height:23px;background:repeating-linear-gradient(180deg,#bdbdc2 0 3px,transparent 3px 5px)"></div>
<div style="position:absolute;left:1647px;top:230px;width:1px;height:23px;background:#c6c6cc"></div>
<div style="position:absolute;left:1668px;top:230px;width:1px;height:23px;background:#c6c6cc"></div>
<div style="left:1748px;top:230px;width:1px;height:23px;background:repeating-linear-gradient(180deg,#bdbdc2 0 3px,transparent 3px 5px)"></div>
<div style="left:1828px;top:230px;width:1px;height:23px;background:repeating-linear-gradient(180deg,#bdbdc2 0 3px,transparent 3px 5px)"></div>
<div style="left:1909px;top:230px;width:1px;height:23px;background:repeating-linear-gradient(180deg,#bdbdc2 0 3px,transparent 3px 5px)"></div>
<div class="t" style="left:1669px;top:230px;width:80px;height:21px;line-height:21px;text-align:center;font-size:12px;color:#1c1c1c">234</div>
<div class="t" style="left:1749px;top:230px;width:80px;height:21px;line-height:21px;text-align:center;font-size:12px;color:#1c1c1c">234</div>
<div class="t" style="left:1829px;top:230px;width:80px;height:21px;line-height:21px;text-align:center;font-size:12px;color:#1c1c1c">234</div>
<div style="position:absolute;left:838px;top:253px;width:1072px;height:23px;background:#fff"></div>
<div style="position:absolute;left:1669px;top:253px;width:241px;height:23px;background:#f3f3f5"></div>
<div style="left:838px;top:275px;width:1072px;height:1px;background:repeating-linear-gradient(90deg,#bdbdc2 0 3px,transparent 3px 5px)"></div>
<div style="left:927px;top:253px;width:1px;height:23px;background:repeating-linear-gradient(180deg,#bdbdc2 0 3px,transparent 3px 5px)"></div>
<div style="left:1017px;top:253px;width:1px;height:23px;background:repeating-linear-gradient(180deg,#bdbdc2 0 3px,transparent 3px 5px)"></div>
<div style="position:absolute;left:1107px;top:253px;width:1px;height:23px;background:#c6c6cc"></div>
<div style="left:1197px;top:253px;width:1px;height:23px;background:repeating-linear-gradient(180deg,#bdbdc2 0 3px,transparent 3px 5px)"></div>
<div style="left:1287px;top:253px;width:1px;height:23px;background:repeating-linear-gradient(180deg,#bdbdc2 0 3px,transparent 3px 5px)"></div>
<div style="position:absolute;left:1377px;top:253px;width:1px;height:23px;background:#c6c6cc"></div>
<div style="left:1467px;top:253px;width:1px;height:23px;background:repeating-linear-gradient(180deg,#bdbdc2 0 3px,transparent 3px 5px)"></div>
<div style="left:1557px;top:253px;width:1px;height:23px;background:repeating-linear-gradient(180deg,#bdbdc2 0 3px,transparent 3px 5px)"></div>
<div style="position:absolute;left:1647px;top:253px;width:1px;height:23px;background:#c6c6cc"></div>
<div style="position:absolute;left:1668px;top:253px;width:1px;height:23px;background:#c6c6cc"></div>
<div style="left:1748px;top:253px;width:1px;height:23px;background:repeating-linear-gradient(180deg,#bdbdc2 0 3px,transparent 3px 5px)"></div>
<div style="left:1828px;top:253px;width:1px;height:23px;background:repeating-linear-gradient(180deg,#bdbdc2 0 3px,transparent 3px 5px)"></div>
<div style="left:1909px;top:253px;width:1px;height:23px;background:repeating-linear-gradient(180deg,#bdbdc2 0 3px,transparent 3px 5px)"></div>
<div class="t" style="left:1669px;top:253px;width:80px;height:21px;line-height:21px;text-align:center;font-size:12px;color:#1c1c1c">541</div>
<div class="t" style="left:1749px;top:253px;width:80px;height:21px;line-height:21px;text-align:center;font-size:12px;color:#1c1c1c">541</div>
<div class="t" style="left:1829px;top:253px;width:80px;height:21px;line-height:21px;text-align:center;font-size:12px;color:#1c1c1c">541</div>
<div style="position:absolute;left:838px;top:276px;width:1072px;height:23px;background:#23599e"></div>
<div style="position:absolute;left:1668px;top:276px;width:1px;height:23px;background:rgba(255,255,255,.35)"></div>
<div class="t" style="left:838px;top:276px;width:90px;height:19px;line-height:19px;text-align:center;font-size:12px;color:#fff">5</div>
<div class="t" style="left:928px;top:276px;width:90px;height:19px;line-height:19px;text-align:center;font-size:12px;color:#fff">5</div>
<div class="t" style="left:1018px;top:276px;width:90px;height:19px;line-height:19px;text-align:center;font-size:12px;color:#3fcf6b">5</div>
<div class="t" style="left:1108px;top:276px;width:90px;height:19px;line-height:19px;text-align:center;font-size:12px;color:#fff">5</div>
<div class="t" style="left:1198px;top:276px;width:90px;height:19px;line-height:19px;text-align:center;font-size:12px;color:#fff">5</div>
<div class="t" style="left:1288px;top:276px;width:90px;height:19px;line-height:19px;text-align:center;font-size:12px;color:#3fcf6b">5</div>
<div class="t" style="left:1378px;top:276px;width:90px;height:19px;line-height:19px;text-align:center;font-size:12px;color:#fff">5</div>
<div class="t" style="left:1468px;top:276px;width:90px;height:19px;line-height:19px;text-align:center;font-size:12px;color:#fff">5</div>
<div class="t" style="left:1558px;top:276px;width:90px;height:19px;line-height:19px;text-align:center;font-size:12px;color:#3fcf6b">5</div>
<div class="t" style="left:1669px;top:276px;width:80px;height:21px;line-height:21px;text-align:center;font-size:12px;color:#fff">1 583</div>
<div class="t" style="left:1749px;top:276px;width:80px;height:21px;line-height:21px;text-align:center;font-size:12px;color:#fff">1 583</div>
<div class="t" style="left:1829px;top:276px;width:80px;height:21px;line-height:21px;text-align:center;font-size:12px;color:#fff">1 583</div>
<div style="position:absolute;left:838px;top:299px;width:1072px;height:23px;background:#2a6bb8"></div>
<div style="position:absolute;left:1668px;top:299px;width:1px;height:23px;background:rgba(255,255,255,.35)"></div>
<div class="t" style="left:838px;top:299px;width:90px;height:19px;line-height:19px;text-align:center;font-size:12px;color:#fff">5</div>
<div class="t" style="left:928px;top:299px;width:90px;height:19px;line-height:19px;text-align:center;font-size:12px;color:#fff">5</div>
<div class="t" style="left:1018px;top:299px;width:90px;height:19px;line-height:19px;text-align:center;font-size:12px;color:#3fcf6b">5</div>
<div class="t" style="left:1108px;top:299px;width:90px;height:19px;line-height:19px;text-align:center;font-size:12px;color:#fff">5</div>
<div class="t" style="left:1198px;top:299px;width:90px;height:19px;line-height:19px;text-align:center;font-size:12px;color:#fff">5</div>
<div class="t" style="left:1288px;top:299px;width:90px;height:19px;line-height:19px;text-align:center;font-size:12px;color:#3fcf6b">5</div>
<div class="t" style="left:1378px;top:299px;width:90px;height:19px;line-height:19px;text-align:center;font-size:12px;color:#fff">5</div>
<div class="t" style="left:1468px;top:299px;width:90px;height:19px;line-height:19px;text-align:center;font-size:12px;color:#fff">5</div>
<div class="t" style="left:1558px;top:299px;width:90px;height:19px;line-height:19px;text-align:center;font-size:12px;color:#3fcf6b">5</div>
<div class="t" style="left:1669px;top:299px;width:80px;height:21px;line-height:21px;text-align:center;font-size:12px;color:#fff">1 349</div>
<div class="t" style="left:1749px;top:299px;width:80px;height:21px;line-height:21px;text-align:center;font-size:12px;color:#fff">1 349</div>
<div class="t" style="left:1829px;top:299px;width:80px;height:21px;line-height:21px;text-align:center;font-size:12px;color:#fff">1 349</div>
<div style="position:absolute;left:838px;top:322px;width:1072px;height:23px;background:#fff"></div>
<div style="position:absolute;left:1669px;top:322px;width:241px;height:23px;background:#f3f3f5"></div>
<div style="left:838px;top:344px;width:1072px;height:1px;background:repeating-linear-gradient(90deg,#bdbdc2 0 3px,transparent 3px 5px)"></div>
<div style="left:927px;top:322px;width:1px;height:23px;background:repeating-linear-gradient(180deg,#bdbdc2 0 3px,transparent 3px 5px)"></div>
<div style="left:1017px;top:322px;width:1px;height:23px;background:repeating-linear-gradient(180deg,#bdbdc2 0 3px,transparent 3px 5px)"></div>
<div style="position:absolute;left:1107px;top:322px;width:1px;height:23px;background:#c6c6cc"></div>
<div style="left:1197px;top:322px;width:1px;height:23px;background:repeating-linear-gradient(180deg,#bdbdc2 0 3px,transparent 3px 5px)"></div>
<div style="left:1287px;top:322px;width:1px;height:23px;background:repeating-linear-gradient(180deg,#bdbdc2 0 3px,transparent 3px 5px)"></div>
<div style="position:absolute;left:1377px;top:322px;width:1px;height:23px;background:#c6c6cc"></div>
<div style="left:1467px;top:322px;width:1px;height:23px;background:repeating-linear-gradient(180deg,#bdbdc2 0 3px,transparent 3px 5px)"></div>
<div style="left:1557px;top:322px;width:1px;height:23px;background:repeating-linear-gradient(180deg,#bdbdc2 0 3px,transparent 3px 5px)"></div>
<div style="position:absolute;left:1647px;top:322px;width:1px;height:23px;background:#c6c6cc"></div>
<div style="position:absolute;left:1668px;top:322px;width:1px;height:23px;background:#c6c6cc"></div>
<div style="left:1748px;top:322px;width:1px;height:23px;background:repeating-linear-gradient(180deg,#bdbdc2 0 3px,transparent 3px 5px)"></div>
<div style="left:1828px;top:322px;width:1px;height:23px;background:repeating-linear-gradient(180deg,#bdbdc2 0 3px,transparent 3px 5px)"></div>
<div style="left:1909px;top:322px;width:1px;height:23px;background:repeating-linear-gradient(180deg,#bdbdc2 0 3px,transparent 3px 5px)"></div>
<div class="t" style="left:1669px;top:322px;width:80px;height:21px;line-height:21px;text-align:center;font-size:12px;color:#1c1c1c">34</div>
<div class="t" style="left:1749px;top:322px;width:80px;height:21px;line-height:21px;text-align:center;font-size:12px;color:#1c1c1c">34</div>
<div class="t" style="left:1829px;top:322px;width:80px;height:21px;line-height:21px;text-align:center;font-size:12px;color:#1c1c1c">34</div>
<div style="position:absolute;left:838px;top:345px;width:1072px;height:23px;background:#dde9f7"></div>
<div style="left:838px;top:367px;width:1072px;height:1px;background:repeating-linear-gradient(90deg,#bdbdc2 0 3px,transparent 3px 5px)"></div>
<div style="left:927px;top:345px;width:1px;height:23px;background:repeating-linear-gradient(180deg,#bdbdc2 0 3px,transparent 3px 5px)"></div>
<div style="left:1017px;top:345px;width:1px;height:23px;background:repeating-linear-gradient(180deg,#bdbdc2 0 3px,transparent 3px 5px)"></div>
<div style="position:absolute;left:1107px;top:345px;width:1px;height:23px;background:#c6c6cc"></div>
<div style="left:1197px;top:345px;width:1px;height:23px;background:repeating-linear-gradient(180deg,#bdbdc2 0 3px,transparent 3px 5px)"></div>
<div style="left:1287px;top:345px;width:1px;height:23px;background:repeating-linear-gradient(180deg,#bdbdc2 0 3px,transparent 3px 5px)"></div>
<div style="position:absolute;left:1377px;top:345px;width:1px;height:23px;background:#c6c6cc"></div>
<div style="left:1467px;top:345px;width:1px;height:23px;background:repeating-linear-gradient(180deg,#bdbdc2 0 3px,transparent 3px 5px)"></div>
<div style="left:1557px;top:345px;width:1px;height:23px;background:repeating-linear-gradient(180deg,#bdbdc2 0 3px,transparent 3px 5px)"></div>
<div style="position:absolute;left:1647px;top:345px;width:1px;height:23px;background:#c6c6cc"></div>
<div style="position:absolute;left:1668px;top:345px;width:1px;height:23px;background:#c6c6cc"></div>
<div style="left:1748px;top:345px;width:1px;height:23px;background:repeating-linear-gradient(180deg,#bdbdc2 0 3px,transparent 3px 5px)"></div>
<div style="left:1828px;top:345px;width:1px;height:23px;background:repeating-linear-gradient(180deg,#bdbdc2 0 3px,transparent 3px 5px)"></div>
<div style="left:1909px;top:345px;width:1px;height:23px;background:repeating-linear-gradient(180deg,#bdbdc2 0 3px,transparent 3px 5px)"></div>
<div class="t" style="left:838px;top:345px;width:90px;height:19px;line-height:19px;text-align:center;font-size:12px;color:#1c1c1c">5</div>
<div class="t" style="left:928px;top:345px;width:90px;height:19px;line-height:19px;text-align:center;font-size:12px;color:#1c1c1c">5</div>
<div class="t" style="left:1018px;top:345px;width:90px;height:19px;line-height:19px;text-align:center;font-size:12px;color:#3fbf6a">5</div>
<div class="t" style="left:1108px;top:345px;width:90px;height:19px;line-height:19px;text-align:center;font-size:12px;color:#1c1c1c">5</div>
<div class="t" style="left:1198px;top:345px;width:90px;height:19px;line-height:19px;text-align:center;font-size:12px;color:#1c1c1c">5</div>
<div class="t" style="left:1288px;top:345px;width:90px;height:19px;line-height:19px;text-align:center;font-size:12px;color:#3fbf6a">5</div>
<div class="t" style="left:1378px;top:345px;width:90px;height:19px;line-height:19px;text-align:center;font-size:12px;color:#1c1c1c">5</div>
<div class="t" style="left:1468px;top:345px;width:90px;height:19px;line-height:19px;text-align:center;font-size:12px;color:#1c1c1c">5</div>
<div class="t" style="left:1558px;top:345px;width:90px;height:19px;line-height:19px;text-align:center;font-size:12px;color:#3fbf6a">5</div>
<div class="t" style="left:1669px;top:345px;width:80px;height:21px;line-height:21px;text-align:center;font-size:12px;color:#1c1c1c">25</div>
<div class="t" style="left:1749px;top:345px;width:80px;height:21px;line-height:21px;text-align:center;font-size:12px;color:#1c1c1c">25</div>
<div class="t" style="left:1829px;top:345px;width:80px;height:21px;line-height:21px;text-align:center;font-size:12px;color:#1c1c1c">25</div>
<div style="position:absolute;left:838px;top:368px;width:1072px;height:23px;background:#fff"></div>
<div style="position:absolute;left:1669px;top:368px;width:241px;height:23px;background:#f3f3f5"></div>
<div style="left:838px;top:390px;width:1072px;height:1px;background:repeating-linear-gradient(90deg,#bdbdc2 0 3px,transparent 3px 5px)"></div>
<div style="left:927px;top:368px;width:1px;height:23px;background:repeating-linear-gradient(180deg,#bdbdc2 0 3px,transparent 3px 5px)"></div>
<div style="left:1017px;top:368px;width:1px;height:23px;background:repeating-linear-gradient(180deg,#bdbdc2 0 3px,transparent 3px 5px)"></div>
<div style="position:absolute;left:1107px;top:368px;width:1px;height:23px;background:#c6c6cc"></div>
<div style="left:1197px;top:368px;width:1px;height:23px;background:repeating-linear-gradient(180deg,#bdbdc2 0 3px,transparent 3px 5px)"></div>
<div style="left:1287px;top:368px;width:1px;height:23px;background:repeating-linear-gradient(180deg,#bdbdc2 0 3px,transparent 3px 5px)"></div>
<div style="position:absolute;left:1377px;top:368px;width:1px;height:23px;background:#c6c6cc"></div>
<div style="left:1467px;top:368px;width:1px;height:23px;background:repeating-linear-gradient(180deg,#bdbdc2 0 3px,transparent 3px 5px)"></div>
<div style="left:1557px;top:368px;width:1px;height:23px;background:repeating-linear-gradient(180deg,#bdbdc2 0 3px,transparent 3px 5px)"></div>
<div style="position:absolute;left:1647px;top:368px;width:1px;height:23px;background:#c6c6cc"></div>
<div style="position:absolute;left:1668px;top:368px;width:1px;height:23px;background:#c6c6cc"></div>
<div style="left:1748px;top:368px;width:1px;height:23px;background:repeating-linear-gradient(180deg,#bdbdc2 0 3px,transparent 3px 5px)"></div>
<div style="left:1828px;top:368px;width:1px;height:23px;background:repeating-linear-gradient(180deg,#bdbdc2 0 3px,transparent 3px 5px)"></div>
<div style="left:1909px;top:368px;width:1px;height:23px;background:repeating-linear-gradient(180deg,#bdbdc2 0 3px,transparent 3px 5px)"></div>
<div class="t" style="left:1669px;top:368px;width:80px;height:21px;line-height:21px;text-align:center;font-size:12px;color:#1c1c1c">87</div>
<div class="t" style="left:1749px;top:368px;width:80px;height:21px;line-height:21px;text-align:center;font-size:12px;color:#1c1c1c">87</div>
<div class="t" style="left:1829px;top:368px;width:80px;height:21px;line-height:21px;text-align:center;font-size:12px;color:#1c1c1c">87</div>
<div style="position:absolute;left:838px;top:391px;width:1072px;height:23px;background:#fff"></div>
<div style="position:absolute;left:1669px;top:391px;width:241px;height:23px;background:#f3f3f5"></div>
<div style="left:838px;top:413px;width:1072px;height:1px;background:repeating-linear-gradient(90deg,#bdbdc2 0 3px,transparent 3px 5px)"></div>
<div style="left:927px;top:391px;width:1px;height:23px;background:repeating-linear-gradient(180deg,#bdbdc2 0 3px,transparent 3px 5px)"></div>
<div style="left:1017px;top:391px;width:1px;height:23px;background:repeating-linear-gradient(180deg,#bdbdc2 0 3px,transparent 3px 5px)"></div>
<div style="position:absolute;left:1107px;top:391px;width:1px;height:23px;background:#c6c6cc"></div>
<div style="left:1197px;top:391px;width:1px;height:23px;background:repeating-linear-gradient(180deg,#bdbdc2 0 3px,transparent 3px 5px)"></div>
<div style="left:1287px;top:391px;width:1px;height:23px;background:repeating-linear-gradient(180deg,#bdbdc2 0 3px,transparent 3px 5px)"></div>
<div style="position:absolute;left:1377px;top:391px;width:1px;height:23px;background:#c6c6cc"></div>
<div style="left:1467px;top:391px;width:1px;height:23px;background:repeating-linear-gradient(180deg,#bdbdc2 0 3px,transparent 3px 5px)"></div>
<div style="left:1557px;top:391px;width:1px;height:23px;background:repeating-linear-gradient(180deg,#bdbdc2 0 3px,transparent 3px 5px)"></div>
<div style="position:absolute;left:1647px;top:391px;width:1px;height:23px;background:#c6c6cc"></div>
<div style="position:absolute;left:1668px;top:391px;width:1px;height:23px;background:#c6c6cc"></div>
<div style="left:1748px;top:391px;width:1px;height:23px;background:repeating-linear-gradient(180deg,#bdbdc2 0 3px,transparent 3px 5px)"></div>
<div style="left:1828px;top:391px;width:1px;height:23px;background:repeating-linear-gradient(180deg,#bdbdc2 0 3px,transparent 3px 5px)"></div>
<div style="left:1909px;top:391px;width:1px;height:23px;background:repeating-linear-gradient(180deg,#bdbdc2 0 3px,transparent 3px 5px)"></div>
<div class="t" style="left:1669px;top:391px;width:80px;height:21px;line-height:21px;text-align:center;font-size:12px;color:#1c1c1c">672</div>
<div class="t" style="left:1749px;top:391px;width:80px;height:21px;line-height:21px;text-align:center;font-size:12px;color:#1c1c1c">672</div>
<div class="t" style="left:1829px;top:391px;width:80px;height:21px;line-height:21px;text-align:center;font-size:12px;color:#1c1c1c">672</div>
<div style="position:absolute;left:838px;top:414px;width:1072px;height:23px;background:#fff"></div>
<div style="position:absolute;left:1669px;top:414px;width:241px;height:23px;background:#f3f3f5"></div>
<div style="left:838px;top:436px;width:1072px;height:1px;background:repeating-linear-gradient(90deg,#bdbdc2 0 3px,transparent 3px 5px)"></div>
<div style="left:927px;top:414px;width:1px;height:23px;background:repeating-linear-gradient(180deg,#bdbdc2 0 3px,transparent 3px 5px)"></div>
<div style="left:1017px;top:414px;width:1px;height:23px;background:repeating-linear-gradient(180deg,#bdbdc2 0 3px,transparent 3px 5px)"></div>
<div style="position:absolute;left:1107px;top:414px;width:1px;height:23px;background:#c6c6cc"></div>
<div style="left:1197px;top:414px;width:1px;height:23px;background:repeating-linear-gradient(180deg,#bdbdc2 0 3px,transparent 3px 5px)"></div>
<div style="left:1287px;top:414px;width:1px;height:23px;background:repeating-linear-gradient(180deg,#bdbdc2 0 3px,transparent 3px 5px)"></div>
<div style="position:absolute;left:1377px;top:414px;width:1px;height:23px;background:#c6c6cc"></div>
<div style="left:1467px;top:414px;width:1px;height:23px;background:repeating-linear-gradient(180deg,#bdbdc2 0 3px,transparent 3px 5px)"></div>
<div style="left:1557px;top:414px;width:1px;height:23px;background:repeating-linear-gradient(180deg,#bdbdc2 0 3px,transparent 3px 5px)"></div>
<div style="position:absolute;left:1647px;top:414px;width:1px;height:23px;background:#c6c6cc"></div>
<div style="position:absolute;left:1668px;top:414px;width:1px;height:23px;background:#c6c6cc"></div>
<div style="left:1748px;top:414px;width:1px;height:23px;background:repeating-linear-gradient(180deg,#bdbdc2 0 3px,transparent 3px 5px)"></div>
<div style="left:1828px;top:414px;width:1px;height:23px;background:repeating-linear-gradient(180deg,#bdbdc2 0 3px,transparent 3px 5px)"></div>
<div style="left:1909px;top:414px;width:1px;height:23px;background:repeating-linear-gradient(180deg,#bdbdc2 0 3px,transparent 3px 5px)"></div>
<div class="t" style="left:1669px;top:414px;width:80px;height:21px;line-height:21px;text-align:center;font-size:12px;color:#1c1c1c">531</div>
<div class="t" style="left:1749px;top:414px;width:80px;height:21px;line-height:21px;text-align:center;font-size:12px;color:#1c1c1c">531</div>
<div class="t" style="left:1829px;top:414px;width:80px;height:21px;line-height:21px;text-align:center;font-size:12px;color:#1c1c1c">531</div>
<div style="position:absolute;left:838px;top:437px;width:1072px;height:23px;background:#2a6bb8"></div>
<div style="position:absolute;left:1668px;top:437px;width:1px;height:23px;background:rgba(255,255,255,.35)"></div>
<div class="t" style="left:1669px;top:437px;width:80px;height:21px;line-height:21px;text-align:center;font-size:12px;color:#fff">157</div>
<div class="t" style="left:1749px;top:437px;width:80px;height:21px;line-height:21px;text-align:center;font-size:12px;color:#fff">157</div>
<div class="t" style="left:1829px;top:437px;width:80px;height:21px;line-height:21px;text-align:center;font-size:12px;color:#fff">157</div>
<div style="position:absolute;left:838px;top:460px;width:1072px;height:23px;background:#fff"></div>
<div style="position:absolute;left:1669px;top:460px;width:241px;height:23px;background:#f3f3f5"></div>
<div style="left:838px;top:482px;width:1072px;height:1px;background:repeating-linear-gradient(90deg,#bdbdc2 0 3px,transparent 3px 5px)"></div>
<div style="left:927px;top:460px;width:1px;height:23px;background:repeating-linear-gradient(180deg,#bdbdc2 0 3px,transparent 3px 5px)"></div>
<div style="left:1017px;top:460px;width:1px;height:23px;background:repeating-linear-gradient(180deg,#bdbdc2 0 3px,transparent 3px 5px)"></div>
<div style="position:absolute;left:1107px;top:460px;width:1px;height:23px;background:#c6c6cc"></div>
<div style="left:1197px;top:460px;width:1px;height:23px;background:repeating-linear-gradient(180deg,#bdbdc2 0 3px,transparent 3px 5px)"></div>
<div style="left:1287px;top:460px;width:1px;height:23px;background:repeating-linear-gradient(180deg,#bdbdc2 0 3px,transparent 3px 5px)"></div>
<div style="position:absolute;left:1377px;top:460px;width:1px;height:23px;background:#c6c6cc"></div>
<div style="left:1467px;top:460px;width:1px;height:23px;background:repeating-linear-gradient(180deg,#bdbdc2 0 3px,transparent 3px 5px)"></div>
<div style="left:1557px;top:460px;width:1px;height:23px;background:repeating-linear-gradient(180deg,#bdbdc2 0 3px,transparent 3px 5px)"></div>
<div style="position:absolute;left:1647px;top:460px;width:1px;height:23px;background:#c6c6cc"></div>
<div style="position:absolute;left:1668px;top:460px;width:1px;height:23px;background:#c6c6cc"></div>
<div style="left:1748px;top:460px;width:1px;height:23px;background:repeating-linear-gradient(180deg,#bdbdc2 0 3px,transparent 3px 5px)"></div>
<div style="left:1828px;top:460px;width:1px;height:23px;background:repeating-linear-gradient(180deg,#bdbdc2 0 3px,transparent 3px 5px)"></div>
<div style="left:1909px;top:460px;width:1px;height:23px;background:repeating-linear-gradient(180deg,#bdbdc2 0 3px,transparent 3px 5px)"></div>
<div class="t" style="left:1669px;top:460px;width:80px;height:21px;line-height:21px;text-align:center;font-size:12px;color:#1c1c1c">12</div>
<div class="t" style="left:1749px;top:460px;width:80px;height:21px;line-height:21px;text-align:center;font-size:12px;color:#1c1c1c">12</div>
<div class="t" style="left:1829px;top:460px;width:80px;height:21px;line-height:21px;text-align:center;font-size:12px;color:#1c1c1c">12</div>
<div style="position:absolute;left:838px;top:483px;width:1072px;height:23px;background:#fff"></div>
<div style="position:absolute;left:1669px;top:483px;width:241px;height:23px;background:#f3f3f5"></div>
<div style="left:838px;top:505px;width:1072px;height:1px;background:repeating-linear-gradient(90deg,#bdbdc2 0 3px,transparent 3px 5px)"></div>
<div style="left:927px;top:483px;width:1px;height:23px;background:repeating-linear-gradient(180deg,#bdbdc2 0 3px,transparent 3px 5px)"></div>
<div style="left:1017px;top:483px;width:1px;height:23px;background:repeating-linear-gradient(180deg,#bdbdc2 0 3px,transparent 3px 5px)"></div>
<div style="position:absolute;left:1107px;top:483px;width:1px;height:23px;background:#c6c6cc"></div>
<div style="left:1197px;top:483px;width:1px;height:23px;background:repeating-linear-gradient(180deg,#bdbdc2 0 3px,transparent 3px 5px)"></div>
<div style="left:1287px;top:483px;width:1px;height:23px;background:repeating-linear-gradient(180deg,#bdbdc2 0 3px,transparent 3px 5px)"></div>
<div style="position:absolute;left:1377px;top:483px;width:1px;height:23px;background:#c6c6cc"></div>
<div style="left:1467px;top:483px;width:1px;height:23px;background:repeating-linear-gradient(180deg,#bdbdc2 0 3px,transparent 3px 5px)"></div>
<div style="left:1557px;top:483px;width:1px;height:23px;background:repeating-linear-gradient(180deg,#bdbdc2 0 3px,transparent 3px 5px)"></div>
<div style="position:absolute;left:1647px;top:483px;width:1px;height:23px;background:#c6c6cc"></div>
<div style="position:absolute;left:1668px;top:483px;width:1px;height:23px;background:#c6c6cc"></div>
<div style="left:1748px;top:483px;width:1px;height:23px;background:repeating-linear-gradient(180deg,#bdbdc2 0 3px,transparent 3px 5px)"></div>
<div style="left:1828px;top:483px;width:1px;height:23px;background:repeating-linear-gradient(180deg,#bdbdc2 0 3px,transparent 3px 5px)"></div>
<div style="left:1909px;top:483px;width:1px;height:23px;background:repeating-linear-gradient(180deg,#bdbdc2 0 3px,transparent 3px 5px)"></div>
<div class="t" style="left:1669px;top:483px;width:80px;height:21px;line-height:21px;text-align:center;font-size:12px;color:#1c1c1c">45</div>
<div class="t" style="left:1749px;top:483px;width:80px;height:21px;line-height:21px;text-align:center;font-size:12px;color:#1c1c1c">45</div>
<div class="t" style="left:1829px;top:483px;width:80px;height:21px;line-height:21px;text-align:center;font-size:12px;color:#1c1c1c">45</div>
<div style="position:absolute;left:838px;top:506px;width:1072px;height:23px;background:#fff"></div>
<div style="position:absolute;left:1669px;top:506px;width:241px;height:23px;background:#f3f3f5"></div>
<div style="left:838px;top:528px;width:1072px;height:1px;background:repeating-linear-gradient(90deg,#bdbdc2 0 3px,transparent 3px 5px)"></div>
<div style="left:927px;top:506px;width:1px;height:23px;background:repeating-linear-gradient(180deg,#bdbdc2 0 3px,transparent 3px 5px)"></div>
<div style="left:1017px;top:506px;width:1px;height:23px;background:repeating-linear-gradient(180deg,#bdbdc2 0 3px,transparent 3px 5px)"></div>
<div style="position:absolute;left:1107px;top:506px;width:1px;height:23px;background:#c6c6cc"></div>
<div style="left:1197px;top:506px;width:1px;height:23px;background:repeating-linear-gradient(180deg,#bdbdc2 0 3px,transparent 3px 5px)"></div>
<div style="left:1287px;top:506px;width:1px;height:23px;background:repeating-linear-gradient(180deg,#bdbdc2 0 3px,transparent 3px 5px)"></div>
<div style="position:absolute;left:1377px;top:506px;width:1px;height:23px;background:#c6c6cc"></div>
<div style="left:1467px;top:506px;width:1px;height:23px;background:repeating-linear-gradient(180deg,#bdbdc2 0 3px,transparent 3px 5px)"></div>
<div style="left:1557px;top:506px;width:1px;height:23px;background:repeating-linear-gradient(180deg,#bdbdc2 0 3px,transparent 3px 5px)"></div>
<div style="position:absolute;left:1647px;top:506px;width:1px;height:23px;background:#c6c6cc"></div>
<div style="position:absolute;left:1668px;top:506px;width:1px;height:23px;background:#c6c6cc"></div>
<div style="left:1748px;top:506px;width:1px;height:23px;background:repeating-linear-gradient(180deg,#bdbdc2 0 3px,transparent 3px 5px)"></div>
<div style="left:1828px;top:506px;width:1px;height:23px;background:repeating-linear-gradient(180deg,#bdbdc2 0 3px,transparent 3px 5px)"></div>
<div style="left:1909px;top:506px;width:1px;height:23px;background:repeating-linear-gradient(180deg,#bdbdc2 0 3px,transparent 3px 5px)"></div>
<div class="t" style="left:1669px;top:506px;width:80px;height:21px;line-height:21px;text-align:center;font-size:12px;color:#1c1c1c">100</div>
<div class="t" style="left:1749px;top:506px;width:80px;height:21px;line-height:21px;text-align:center;font-size:12px;color:#1c1c1c">100</div>
<div class="t" style="left:1829px;top:506px;width:80px;height:21px;line-height:21px;text-align:center;font-size:12px;color:#1c1c1c">100</div>
<div style="position:absolute;left:838px;top:529px;width:1072px;height:23px;background:#2a6bb8"></div>
<div style="position:absolute;left:1668px;top:529px;width:1px;height:23px;background:rgba(255,255,255,.35)"></div>
<div class="t" style="left:1669px;top:529px;width:80px;height:21px;line-height:21px;text-align:center;font-size:12px;color:#fff">77</div>
<div class="t" style="left:1749px;top:529px;width:80px;height:21px;line-height:21px;text-align:center;font-size:12px;color:#fff">77</div>
<div class="t" style="left:1829px;top:529px;width:80px;height:21px;line-height:21px;text-align:center;font-size:12px;color:#fff">77</div>
<div style="position:absolute;left:838px;top:552px;width:1072px;height:23px;background:#fff"></div>
<div style="position:absolute;left:1669px;top:552px;width:241px;height:23px;background:#f3f3f5"></div>
<div style="left:838px;top:574px;width:1072px;height:1px;background:repeating-linear-gradient(90deg,#bdbdc2 0 3px,transparent 3px 5px)"></div>
<div style="left:927px;top:552px;width:1px;height:23px;background:repeating-linear-gradient(180deg,#bdbdc2 0 3px,transparent 3px 5px)"></div>
<div style="left:1017px;top:552px;width:1px;height:23px;background:repeating-linear-gradient(180deg,#bdbdc2 0 3px,transparent 3px 5px)"></div>
<div style="position:absolute;left:1107px;top:552px;width:1px;height:23px;background:#c6c6cc"></div>
<div style="left:1197px;top:552px;width:1px;height:23px;background:repeating-linear-gradient(180deg,#bdbdc2 0 3px,transparent 3px 5px)"></div>
<div style="left:1287px;top:552px;width:1px;height:23px;background:repeating-linear-gradient(180deg,#bdbdc2 0 3px,transparent 3px 5px)"></div>
<div style="position:absolute;left:1377px;top:552px;width:1px;height:23px;background:#c6c6cc"></div>
<div style="left:1467px;top:552px;width:1px;height:23px;background:repeating-linear-gradient(180deg,#bdbdc2 0 3px,transparent 3px 5px)"></div>
<div style="left:1557px;top:552px;width:1px;height:23px;background:repeating-linear-gradient(180deg,#bdbdc2 0 3px,transparent 3px 5px)"></div>
<div style="position:absolute;left:1647px;top:552px;width:1px;height:23px;background:#c6c6cc"></div>
<div style="position:absolute;left:1668px;top:552px;width:1px;height:23px;background:#c6c6cc"></div>
<div style="left:1748px;top:552px;width:1px;height:23px;background:repeating-linear-gradient(180deg,#bdbdc2 0 3px,transparent 3px 5px)"></div>
<div style="left:1828px;top:552px;width:1px;height:23px;background:repeating-linear-gradient(180deg,#bdbdc2 0 3px,transparent 3px 5px)"></div>
<div style="left:1909px;top:552px;width:1px;height:23px;background:repeating-linear-gradient(180deg,#bdbdc2 0 3px,transparent 3px 5px)"></div>
<div class="t" style="left:1669px;top:552px;width:80px;height:21px;line-height:21px;text-align:center;font-size:12px;color:#1c1c1c">77</div>
<div class="t" style="left:1749px;top:552px;width:80px;height:21px;line-height:21px;text-align:center;font-size:12px;color:#1c1c1c">77</div>
<div class="t" style="left:1829px;top:552px;width:80px;height:21px;line-height:21px;text-align:center;font-size:12px;color:#1c1c1c">77</div>
<div style="position:absolute;left:1910px;top:88px;width:8px;height:488px;background:#f2f2f4"></div>
<div style="position:absolute;left:1910.5px;top:89px;width:7.5px;height:48px;background:#dcdcdf;border-radius:4px"></div>
<div style="position:absolute;left:838px;top:575px;width:1080px;height:15px;background:#f2f2f4"></div>
<div style="position:absolute;left:1063px;top:577.5px;width:22px;height:11.5px;background:#dcdcdf;border-radius:6px"></div>
<div style="position:absolute;left:45px;top:596px;width:1873px;height:52px;background:#fff"></div>
<div style="position:absolute;left:45px;top:647.5px;width:1873px;height:1px;background:#c6c6cc"></div>
<div class="t" style="left:80px;top:606px;width:157px;height:24px;line-height:24px;text-align:center;font-size:16.5px;color:#3a3a3e;letter-spacing:.52px">Карточка работы</div>
<div class="t" style="left:308px;top:606px;width:131px;height:24px;line-height:24px;text-align:center;font-size:16.5px;color:#3a3a3e;letter-spacing:.52px">Связи работы</div>
<div class="t" style="left:509.5px;top:606px;width:181px;height:24px;line-height:24px;text-align:center;font-size:16.5px;color:#3a3a3e;letter-spacing:.52px">Связанные графики</div>
<div class="t" style="left:760.5px;top:606px;width:127px;height:24px;line-height:24px;text-align:center;font-size:16.5px;color:#3a3a3e;letter-spacing:.52px">Справочники</div>
<div class="t" style="left:958px;top:606px;width:225.5px;height:24px;line-height:24px;text-align:center;font-size:16.5px;color:#2a7bd5;letter-spacing:.52px">Ресурсное планирование</div>
<div class="t" style="left:1254px;top:606px;width:104px;height:24px;line-height:24px;text-align:center;font-size:16.5px;color:#3a3a3e;letter-spacing:.52px">Чек-листы</div>
<div class="t" style="left:1427px;top:606px;width:194.5px;height:24px;line-height:24px;text-align:center;font-size:16.5px;color:#3a3a3e;letter-spacing:.52px">Фото / Документация</div>
<div class="t" style="left:1692.5px;top:606px;width:194.5px;height:24px;line-height:24px;text-align:center;font-size:16.5px;color:#3a3a3e;letter-spacing:.52px">Запросы и поручения</div>
<div style="position:absolute;left:923px;top:636.5px;width:296px;height:3px;background:#1f6fd1;border-radius:1px"></div>
<div style="position:absolute;left:45px;top:691px;width:1873px;height:1px;background:#c6c6cc"></div>
<div style="position:absolute;left:296px;top:648.5px;width:42.5px;height:42.5px;background:#e2e2e6"></div>
<div style="position:absolute;left:93px;top:648.5px;width:1px;height:42.5px;background:#c6c6cc"></div>
<div style="position:absolute;left:194px;top:648.5px;width:1px;height:42.5px;background:#c6c6cc"></div>
<div style="position:absolute;left:439px;top:648.5px;width:1px;height:42.5px;background:#c6c6cc"></div>
<svg class="ic" style="left:52.70px;top:659.00px;width:24.0px;height:24.0px;color:#4a4a50" viewBox="0 0 24 24" fill="none" stroke="currentColor" stroke-width="2" stroke-linecap="round" stroke-linejoin="round"><path d="M3.3 2.2H20.3A1.2 1.2 0 0 1 21.2 4.2L15 11.3V18.6A1.2 1.2 0 0 1 13.6 19.8L11.2 20.6A1 1 0 0 1 9.8 19.6V11.3L2.4 4.2A1.2 1.2 0 0 1 3.3 2.2Z" stroke-width="2.1"/><path d="M19.5 20.6H26L22.75 23.8Z" fill="currentColor" stroke="none"/></svg>
<svg class="ic" style="left:108.00px;top:659.00px;width:24.0px;height:24.0px;color:#4a4a50" viewBox="0 0 24 24" fill="none" stroke="currentColor" stroke-width="2" stroke-linecap="round" stroke-linejoin="round"><g transform="translate(-3.1 -3.1) scale(1.25)" stroke-width="1.6"><path d="M17 10h-3v-3l3.5-3.5a6 6 0 0 0-8 8l-6 6a2 2 0 0 0 3 3l6-6a6 6 0 0 0 8-8l-3.5 3.5"/></g><path d="M17.8 21.1H23.7L20.75 23.9Z" fill="currentColor" stroke="none"/></svg>
<svg class="ic" style="left:156.30px;top:659.00px;width:24.0px;height:24.0px;color:#4a4a50" viewBox="0 0 24 24" fill="none" stroke="currentColor" stroke-width="2" stroke-linecap="round" stroke-linejoin="round"><rect x="1.9" y="4.1" width="19.6" height="18.7" rx="3"/><path d="M6.5 0.5V4M16.8 0.5V4M1.9 6.9H21.5M7 6.9V22.8M11.7 6.9V22.8M16.8 6.9V22.8"/></svg>
<svg class="ic" style="left:209.00px;top:659.00px;width:24.0px;height:24.0px;color:#c4c4c8" viewBox="0 0 24 24" fill="none" stroke="currentColor" stroke-width="2" stroke-linecap="round" stroke-linejoin="round"><rect x="1.8" y="3.4" width="19.7" height="18.8" rx="3.4"/><path d="M7 0.4V3.4M17.1 0.4V3.4M1.8 7.6H21.5"/><path d="M7 7.6V22.2"/><path d="M17.8 11.6V19.8L11.2 15.7Z" fill="currentColor" stroke="none"/></svg>
<svg class="ic" style="left:257.00px;top:659.00px;width:24.0px;height:24.0px;color:#c4c4c8" viewBox="0 0 24 24" fill="none" stroke="currentColor" stroke-width="2" stroke-linecap="round" stroke-linejoin="round"><rect x="1.8" y="3.4" width="19.7" height="18.8" rx="3.4"/><path d="M7 0.4V3.4M17.1 0.4V3.4M1.8 7.6H21.5"/><path d="M7 7.6V22.2"/><path d="M11 11.6V19.8L17.6 15.7Z" fill="currentColor" stroke="none"/></svg>
<svg class="ic" style="left:305.70px;top:659.00px;width:24.0px;height:24.0px;color:#4a4a50" viewBox="0 0 24 24" fill="none" stroke="currentColor" stroke-width="2" stroke-linecap="round" stroke-linejoin="round"><rect x="1.8" y="3.4" width="19.7" height="18.8" rx="3.4"/><path d="M7 0.4V3.4M17.1 0.4V3.4M1.8 7.6H21.5"/><text x="11.65" y="19.8" text-anchor="middle" font-family="Liberation Sans" font-weight="bold" font-size="11.5" fill="currentColor" stroke="none">S</text></svg>
<svg class="ic" style="left:353.30px;top:659.00px;width:24.0px;height:24.0px;color:#4a4a50" viewBox="0 0 24 24" fill="none" stroke="currentColor" stroke-width="2" stroke-linecap="round" stroke-linejoin="round"><rect x="1.8" y="3.4" width="19.7" height="18.8" rx="3.4"/><path d="M7 0.4V3.4M17.1 0.4V3.4M1.8 7.6H21.5"/><text x="11.9" y="19.8" text-anchor="middle" font-family="Liberation Sans" font-weight="bold" font-size="11.5" fill="currentColor" stroke="none">D</text></svg>
<svg class="ic" style="left:401.70px;top:659.00px;width:24.0px;height:24.0px;color:#4a4a50" viewBox="0 0 24 24" fill="none" stroke="currentColor" stroke-width="2" stroke-linecap="round" stroke-linejoin="round"><rect x="1.8" y="3.4" width="19.7" height="18.8" rx="3.4"/><path d="M7 0.4V3.4M17.1 0.4V3.4M1.8 7.6H21.5"/><text x="11.9" y="19.8" text-anchor="middle" font-family="Liberation Sans" font-weight="bold" font-size="11.5" fill="currentColor" stroke="none">F</text></svg>
<svg class="ic" style="left:454.40px;top:659.00px;width:24.0px;height:24.0px;color:#4a4a50" viewBox="0 0 24 24" fill="none" stroke="currentColor" stroke-width="2" stroke-linecap="round" stroke-linejoin="round"><circle cx="12" cy="12" r="11"/><path d="M5.6 12.6L8.3 14.8L13 10.2M10.5 13.6L11.6 14.6L18.2 9" stroke-width="2.2"/></svg>
<svg class="ic" style="left:502.40px;top:659.00px;width:24.0px;height:24.0px;color:#c4c4c8" viewBox="0 0 24 24" fill="none" stroke="currentColor" stroke-width="2" stroke-linecap="round" stroke-linejoin="round"><circle cx="12" cy="12" r="11"/><path d="M7.5 12.5L10.5 15.3L16.5 9.3"/></svg>
<svg class="ic" style="left:550.40px;top:659.00px;width:24.0px;height:24.0px;color:#c4c4c8" viewBox="0 0 24 24" fill="none" stroke="currentColor" stroke-width="2" stroke-linecap="round" stroke-linejoin="round"><circle cx="12" cy="12" r="11"/><path d="M8.2 8.2L15.8 15.8M15.8 8.2L8.2 15.8"/></svg>
<div style="position:absolute;left:45px;top:716px;width:1873px;height:1px;background:#c6c6cc"></div>
<div style="position:absolute;left:45px;top:717px;width:800px;height:24px;background:#efeff2"></div>
<div style="position:absolute;left:845px;top:717px;width:1073px;height:24px;background:#efeff2"></div>
<div style="position:absolute;left:45px;top:741px;width:1873px;height:159px;background:#fff"></div>
<div style="position:absolute;left:45px;top:740.5px;width:1873px;height:1px;background:#c6c6cc"></div>
<div class="t" style="left:45px;top:717.5px;width:139px;height:24px;line-height:24px;text-align:center;font-size:12px;color:#1c1c1c">Тип</div>
<div class="t" style="left:184px;top:717.5px;width:121px;height:24px;line-height:24px;text-align:center;font-size:12px;color:#1c1c1c">Наименование</div>
<div class="t" style="left:305px;top:717.5px;width:120px;height:24px;line-height:24px;text-align:center;font-size:12px;color:#1c1c1c">План</div>
<div class="t" style="left:425px;top:717.5px;width:100px;height:24px;line-height:24px;text-align:center;font-size:12px;color:#1c1c1c">Факт</div>
<div class="t" style="left:525px;top:717.5px;width:100px;height:24px;line-height:24px;text-align:center;font-size:12px;color:#1c1c1c">Остаток</div>
<div class="t" style="left:625px;top:717.5px;width:120px;height:24px;line-height:24px;text-align:center;font-size:12px;color:#1c1c1c">Нераспределенн...</div>
<div class="t" style="left:745px;top:717.5px;width:100px;height:24px;line-height:24px;text-align:center;font-size:12px;color:#1c1c1c">Долг</div>
<div style="position:absolute;left:184px;top:717px;width:1px;height:157px;background:#c6c6cc"></div>
<div style="position:absolute;left:304px;top:717px;width:1px;height:157px;background:#c6c6cc"></div>
<div style="position:absolute;left:424px;top:717px;width:1px;height:157px;background:#c6c6cc"></div>
<div style="position:absolute;left:525px;top:717px;width:1px;height:157px;background:#c6c6cc"></div>
<div style="position:absolute;left:624.5px;top:717px;width:1px;height:157px;background:#c6c6cc"></div>
<div style="position:absolute;left:745px;top:717px;width:1px;height:157px;background:#c6c6cc"></div>
<div style="position:absolute;left:845px;top:717px;width:1px;height:183px;background:#c6c6cc"></div>
<div style="position:absolute;left:45px;top:784.5px;width:800px;height:1px;background:#c6c6cc"></div>
<div class="t" style="left:80px;top:741.5px;width:100px;height:44px;line-height:44px;font-size:12px;color:#1c1c1c">Физобъем</div>
<div class="t" style="left:195px;top:741.5px;width:109px;height:44px;line-height:44px;font-size:12px;color:#1c1c1c;overflow:hidden">Устройство буронабивных свай</div>
<div class="t" style="left:305px;top:741.5px;width:120px;height:44px;line-height:44px;text-align:center;font-size:12px;color:#1c1c1c">25</div>
<div class="t" style="left:425px;top:741.5px;width:100px;height:44px;line-height:44px;text-align:center;font-size:12px;color:#1c1c1c">25</div>
<div class="t" style="left:525px;top:741.5px;width:100px;height:44px;line-height:44px;text-align:center;font-size:12px;color:#1c1c1c">0</div>
<div class="t" style="left:625px;top:741.5px;width:120px;height:44px;line-height:44px;text-align:center;font-size:12px;color:#1c1c1c">0</div>
<div class="t" style="left:745px;top:741.5px;width:100px;height:44px;line-height:44px;text-align:center;font-size:12px;color:#1c1c1c">0</div>
<div style="position:absolute;left:45px;top:828.5px;width:800px;height:1px;background:#c6c6cc"></div>
<div class="t" style="left:80px;top:785.5px;width:100px;height:44px;line-height:44px;font-size:12px;color:#1c1c1c">Трудозатраты</div>
<div class="t" style="left:305px;top:785.5px;width:120px;height:44px;line-height:44px;text-align:center;font-size:12px;color:#1c1c1c">150</div>
<div class="t" style="left:425px;top:785.5px;width:100px;height:44px;line-height:44px;text-align:center;font-size:12px;color:#1c1c1c">150</div>
<div class="t" style="left:525px;top:785.5px;width:100px;height:44px;line-height:44px;text-align:center;font-size:12px;color:#1c1c1c">0</div>
<div class="t" style="left:625px;top:785.5px;width:120px;height:44px;line-height:44px;text-align:center;font-size:12px;color:#1c1c1c">0</div>
<div class="t" style="left:745px;top:785.5px;width:100px;height:44px;line-height:44px;text-align:center;font-size:12px;color:#1c1c1c">0</div>
<div style="position:absolute;left:45px;top:872.5px;width:800px;height:1px;background:#c6c6cc"></div>
<div class="t" style="left:80px;top:829.5px;width:100px;height:44px;line-height:44px;font-size:12px;color:#1c1c1c">Стоимость</div>
<div class="t" style="left:305px;top:829.5px;width:120px;height:44px;line-height:44px;text-align:center;font-size:12px;color:#1c1c1c">114 750</div>
<div class="t" style="left:425px;top:829.5px;width:100px;height:44px;line-height:44px;text-align:center;font-size:12px;color:#1c1c1c">114 750</div>
<div class="t" style="left:525px;top:829.5px;width:100px;height:44px;line-height:44px;text-align:center;font-size:12px;color:#1c1c1c">0</div>
<div class="t" style="left:625px;top:829.5px;width:120px;height:44px;line-height:44px;text-align:center;font-size:12px;color:#1c1c1c">0</div>
<div class="t" style="left:745px;top:829.5px;width:100px;height:44px;line-height:44px;text-align:center;font-size:12px;color:#1c1c1c">0</div>
<svg class="ic" style="left:55.00px;top:753.50px;width:17.28px;height:17.28px;color:#3a3a3e" viewBox="0 0 24 24" fill="none" stroke="currentColor" stroke-width="2" stroke-linecap="round" stroke-linejoin="round"><circle cx="11.6" cy="1.9" r="2" fill="currentColor" stroke="none"/><path d="M1.8 9.8L8 4.6L12.6 9.2L10.2 12.6L6.6 11.2L4.8 12.8Z" fill="currentColor" stroke-width="1.4"/><path d="M6 12L2.2 21M8.6 12.5L10.4 21" stroke-width="2"/><path d="M10 9.5L18 16" stroke-width="1.6"/><path d="M11.5 21.6L17.5 13.8L23.6 21.6Z" fill="currentColor" stroke="none"/></svg>
<svg class="ic" style="left:55.00px;top:798.00px;width:17.28px;height:17.28px;color:#3a3a3e" viewBox="0 0 24 24" fill="none" stroke="currentColor" stroke-width="2" stroke-linecap="round" stroke-linejoin="round"><path d="M7.3 7.5A4.7 4.7 0 0 0 16.7 7.5Z" fill="currentColor" stroke="none"/><path d="M8 7.2V5.2A4 4 0 0 1 16 5.2V7.2Z" fill="currentColor" stroke="none"/><path d="M6.5 7.6H17.5" stroke-width="1.6"/><path d="M12 1.6V3.6" stroke-width="1.6"/><circle cx="12" cy="9.7" r="3.6" fill="#fff" stroke="none"/><path d="M8.6 9.3A3.4 3.4 0 0 0 15.4 9.3" stroke-width="1.6"/><path d="M2.5 22.3C2.5 17 6.8 14.8 12 14.8S21.5 17 21.5 22.3" stroke-width="1.8"/></svg>
<svg class="ic" style="left:55.00px;top:842.00px;width:17.28px;height:17.28px;color:#3a3a3e" viewBox="0 0 24 24" fill="none" stroke="currentColor" stroke-width="1.7" stroke-linecap="round" stroke-linejoin="round"><path d="M7.2 3.3V8.5A4.8 2 0 0 0 16.8 8.5V3.3" fill="#fff"/><ellipse cx="12" cy="3.3" rx="4.8" ry="2" fill="#fff"/><path d="M0.7999999999999998 13.5V20.0A4.8 2 0 0 0 10.399999999999999 20.0V13.5" fill="#fff"/><ellipse cx="5.6" cy="13.5" rx="4.8" ry="2" fill="#fff"/><path d="M13.399999999999999 13.5V20.0A4.8 2 0 0 0 23.0 20.0V13.5" fill="#fff"/><ellipse cx="18.2" cy="13.5" rx="4.8" ry="2" fill="#fff"/><path d="M0.8 16.8A4.8 2 0 0 0 10.4 16.8M13.4 16.8A4.8 2 0 0 0 23 16.8M7.2 6.6A4.8 2 0 0 0 16.8 6.6" stroke-width="1.4"/></svg>
<div class="t" style="left:845.0px;top:692px;width:350.5px;height:24px;line-height:24px;text-align:center;font-size:11.2px;color:#1c1c1c">17.10.2025</div>
<div class="t" style="left:845.0px;top:717.5px;width:70.1px;height:24px;line-height:24px;text-align:center;font-size:11.5px;color:#1c1c1c;letter-spacing:-.1px">Согл.план</div>
<div class="t" style="left:915.1px;top:717.5px;width:70.1px;height:24px;line-height:24px;text-align:center;font-size:11.5px;color:#1c1c1c;letter-spacing:-.1px">Опер.план</div>
<div style="left:915.1px;top:717px;width:1px;height:24px;background:repeating-linear-gradient(180deg,#bdbdc2 0 3px,transparent 3px 5px)"></div>
<div class="t" style="left:985.2px;top:717.5px;width:70.1px;height:24px;line-height:24px;text-align:center;font-size:11.5px;color:#1c1c1c;letter-spacing:-.1px">Факт</div>
<div style="left:985.2px;top:717px;width:1px;height:24px;background:repeating-linear-gradient(180deg,#bdbdc2 0 3px,transparent 3px 5px)"></div>
<div class="t" style="left:1055.3px;top:717.5px;width:70.1px;height:24px;line-height:24px;text-align:center;font-size:11.5px;color:#1c1c1c;letter-spacing:-.1px">Уд. трудоз...</div>
<div style="left:1055.3px;top:717px;width:1px;height:24px;background:repeating-linear-gradient(180deg,#bdbdc2 0 3px,transparent 3px 5px)"></div>
<div class="t" style="left:1125.4px;top:717.5px;width:70.1px;height:24px;line-height:24px;text-align:center;font-size:11.5px;color:#1c1c1c;letter-spacing:-.1px">Ставка</div>
<div style="left:1125.4px;top:717px;width:1px;height:24px;background:repeating-linear-gradient(180deg,#bdbdc2 0 3px,transparent 3px 5px)"></div>
<div style="position:absolute;left:845.0px;top:741px;width:350.5px;height:132px;background:#c5dcf0"></div>
<div style="left:845.0px;top:784px;width:350.5px;height:1px;background:repeating-linear-gradient(90deg,#a9b3bd 0 3px,transparent 3px 5px)"></div>
<div class="t" style="left:847.5px;top:741.5px;width:70.1px;height:44px;line-height:44px;text-align:center;font-size:12px;color:#8a8d92">5</div>
<div style="left:915.1px;top:741px;width:1px;height:44px;background:repeating-linear-gradient(180deg,#a9b3bd 0 3px,transparent 3px 5px)"></div>
<div class="t" style="left:917.6px;top:741.5px;width:70.1px;height:44px;line-height:44px;text-align:center;font-size:12px;color:#8a8d92">5</div>
<div style="left:985.2px;top:741px;width:1px;height:44px;background:repeating-linear-gradient(180deg,#a9b3bd 0 3px,transparent 3px 5px)"></div>
<div class="t" style="left:987.7px;top:741.5px;width:70.1px;height:44px;line-height:44px;text-align:center;font-size:12px;color:#5cc27e">5</div>
<svg class="ic" style="left:985.7px;top:741.5px;width:20px;height:20px" viewBox="0 0 20 20"><path d="M0 0h20L0 19z" fill="#79cc98"/></svg>
<div style="left:1055.3px;top:741px;width:1px;height:44px;background:repeating-linear-gradient(180deg,#a9b3bd 0 3px,transparent 3px 5px)"></div>
<div class="t" style="left:1057.8px;top:741.5px;width:70.1px;height:44px;line-height:44px;text-align:center;font-size:12px;color:#8a8d92">6</div>
<div style="left:1125.4px;top:741px;width:1px;height:44px;background:repeating-linear-gradient(180deg,#a9b3bd 0 3px,transparent 3px 5px)"></div>
<div class="t" style="left:1127.9px;top:741.5px;width:70.1px;height:44px;line-height:44px;text-align:center;font-size:12px;color:#8a8d92">4 590</div>
<div style="left:845.0px;top:828px;width:350.5px;height:1px;background:repeating-linear-gradient(90deg,#a9b3bd 0 3px,transparent 3px 5px)"></div>
<div class="t" style="left:847.5px;top:785.5px;width:70.1px;height:44px;line-height:44px;text-align:center;font-size:12px;color:#8a8d92">25</div>
<div style="left:915.1px;top:785px;width:1px;height:44px;background:repeating-linear-gradient(180deg,#a9b3bd 0 3px,transparent 3px 5px)"></div>
<div class="t" style="left:917.6px;top:785.5px;width:70.1px;height:44px;line-height:44px;text-align:center;font-size:12px;color:#8a8d92">25</div>
<div style="left:985.2px;top:785px;width:1px;height:44px;background:repeating-linear-gradient(180deg,#a9b3bd 0 3px,transparent 3px 5px)"></div>
<div class="t" style="left:987.7px;top:785.5px;width:70.1px;height:44px;line-height:44px;text-align:center;font-size:12px;color:#5cc27e">25</div>
<svg class="ic" style="left:985.7px;top:785.5px;width:20px;height:20px" viewBox="0 0 20 20"><path d="M0 0h20L0 19z" fill="#79cc98"/></svg>
<div style="left:1055.3px;top:785px;width:1px;height:44px;background:repeating-linear-gradient(180deg,#a9b3bd 0 3px,transparent 3px 5px)"></div>
<div class="t" style="left:1057.8px;top:785.5px;width:70.1px;height:44px;line-height:44px;text-align:center;font-size:12px;color:#8a8d92">6</div>
<div style="left:1125.4px;top:785px;width:1px;height:44px;background:repeating-linear-gradient(180deg,#a9b3bd 0 3px,transparent 3px 5px)"></div>
<div class="t" style="left:1127.9px;top:785.5px;width:70.1px;height:44px;line-height:44px;text-align:center;font-size:12px;color:#8a8d92">4 590</div>
<div style="left:845.0px;top:872px;width:350.5px;height:1px;background:repeating-linear-gradient(90deg,#a9b3bd 0 3px,transparent 3px 5px)"></div>
<div class="t" style="left:847.5px;top:829.5px;width:70.1px;height:44px;line-height:44px;text-align:center;font-size:12px;color:#8a8d92">19 125</div>
<div style="left:915.1px;top:829px;width:1px;height:44px;background:repeating-linear-gradient(180deg,#a9b3bd 0 3px,transparent 3px 5px)"></div>
<div class="t" style="left:917.6px;top:829.5px;width:70.1px;height:44px;line-height:44px;text-align:center;font-size:12px;color:#8a8d92">19 125</div>
<div style="left:985.2px;top:829px;width:1px;height:44px;background:repeating-linear-gradient(180deg,#a9b3bd 0 3px,transparent 3px 5px)"></div>
<div class="t" style="left:987.7px;top:829.5px;width:70.1px;height:44px;line-height:44px;text-align:center;font-size:12px;color:#5cc27e">19 125</div>
<svg class="ic" style="left:985.7px;top:829.5px;width:20px;height:20px" viewBox="0 0 20 20"><path d="M0 0h20L0 19z" fill="#79cc98"/></svg>
<div style="left:1055.3px;top:829px;width:1px;height:44px;background:repeating-linear-gradient(180deg,#a9b3bd 0 3px,transparent 3px 5px)"></div>
<div class="t" style="left:1057.8px;top:829.5px;width:70.1px;height:44px;line-height:44px;text-align:center;font-size:12px;color:#8a8d92">6</div>
<div style="left:1125.4px;top:829px;width:1px;height:44px;background:repeating-linear-gradient(180deg,#a9b3bd 0 3px,transparent 3px 5px)"></div>
<div class="t" style="left:1127.9px;top:829.5px;width:70.1px;height:44px;line-height:44px;text-align:center;font-size:12px;color:#8a8d92">4 590</div>
<div class="t" style="left:1195.5px;top:692px;width:350.5px;height:24px;line-height:24px;text-align:center;font-size:11.2px;color:#1c1c1c">18.10.2025</div>
<div style="position:absolute;left:1195.5px;top:692px;width:1px;height:49px;background:#c6c6cc"></div>
<div class="t" style="left:1195.5px;top:717.5px;width:70.1px;height:24px;line-height:24px;text-align:center;font-size:11.5px;color:#1c1c1c;letter-spacing:-.1px">Согл.план</div>
<div class="t" style="left:1265.6px;top:717.5px;width:70.1px;height:24px;line-height:24px;text-align:center;font-size:11.5px;color:#1c1c1c;letter-spacing:-.1px">Опер.план</div>
<div style="left:1265.6px;top:717px;width:1px;height:24px;background:repeating-linear-gradient(180deg,#bdbdc2 0 3px,transparent 3px 5px)"></div>
<div class="t" style="left:1335.7px;top:717.5px;width:70.1px;height:24px;line-height:24px;text-align:center;font-size:11.5px;color:#1c1c1c;letter-spacing:-.1px">Факт</div>
<div style="left:1335.7px;top:717px;width:1px;height:24px;background:repeating-linear-gradient(180deg,#bdbdc2 0 3px,transparent 3px 5px)"></div>
<div class="t" style="left:1405.8px;top:717.5px;width:70.1px;height:24px;line-height:24px;text-align:center;font-size:11.5px;color:#1c1c1c;letter-spacing:-.1px">Уд. трудоз...</div>
<div style="left:1405.8px;top:717px;width:1px;height:24px;background:repeating-linear-gradient(180deg,#bdbdc2 0 3px,transparent 3px 5px)"></div>
<div class="t" style="left:1475.9px;top:717.5px;width:70.1px;height:24px;line-height:24px;text-align:center;font-size:11.5px;color:#1c1c1c;letter-spacing:-.1px">Ставка</div>
<div style="left:1475.9px;top:717px;width:1px;height:24px;background:repeating-linear-gradient(180deg,#bdbdc2 0 3px,transparent 3px 5px)"></div>
<div style="position:absolute;left:1195.5px;top:741px;width:350.5px;height:132px;background:#c5dcf0"></div>
<div style="left:1195.5px;top:784px;width:350.5px;height:1px;background:repeating-linear-gradient(90deg,#a9b3bd 0 3px,transparent 3px 5px)"></div>
<div class="t" style="left:1198.0px;top:741.5px;width:70.1px;height:44px;line-height:44px;text-align:center;font-size:12px;color:#8a8d92">5</div>
<div style="left:1265.6px;top:741px;width:1px;height:44px;background:repeating-linear-gradient(180deg,#a9b3bd 0 3px,transparent 3px 5px)"></div>
<div class="t" style="left:1268.1px;top:741.5px;width:70.1px;height:44px;line-height:44px;text-align:center;font-size:12px;color:#8a8d92">5</div>
<div style="left:1335.7px;top:741px;width:1px;height:44px;background:repeating-linear-gradient(180deg,#a9b3bd 0 3px,transparent 3px 5px)"></div>
<div class="t" style="left:1338.2px;top:741.5px;width:70.1px;height:44px;line-height:44px;text-align:center;font-size:12px;color:#5cc27e">5</div>
<svg class="ic" style="left:1336.2px;top:741.5px;width:20px;height:20px" viewBox="0 0 20 20"><path d="M0 0h20L0 19z" fill="#79cc98"/></svg>
<div style="left:1405.8px;top:741px;width:1px;height:44px;background:repeating-linear-gradient(180deg,#a9b3bd 0 3px,transparent 3px 5px)"></div>
<div class="t" style="left:1408.3px;top:741.5px;width:70.1px;height:44px;line-height:44px;text-align:center;font-size:12px;color:#8a8d92">6</div>
<div style="left:1475.9px;top:741px;width:1px;height:44px;background:repeating-linear-gradient(180deg,#a9b3bd 0 3px,transparent 3px 5px)"></div>
<div class="t" style="left:1478.4px;top:741.5px;width:70.1px;height:44px;line-height:44px;text-align:center;font-size:12px;color:#8a8d92">4 590</div>
<div style="left:1195.5px;top:828px;width:350.5px;height:1px;background:repeating-linear-gradient(90deg,#a9b3bd 0 3px,transparent 3px 5px)"></div>
<div class="t" style="left:1198.0px;top:785.5px;width:70.1px;height:44px;line-height:44px;text-align:center;font-size:12px;color:#8a8d92">25</div>
<div style="left:1265.6px;top:785px;width:1px;height:44px;background:repeating-linear-gradient(180deg,#a9b3bd 0 3px,transparent 3px 5px)"></div>
<div class="t" style="left:1268.1px;top:785.5px;width:70.1px;height:44px;line-height:44px;text-align:center;font-size:12px;color:#8a8d92">25</div>
<div style="left:1335.7px;top:785px;width:1px;height:44px;background:repeating-linear-gradient(180deg,#a9b3bd 0 3px,transparent 3px 5px)"></div>
<div class="t" style="left:1338.2px;top:785.5px;width:70.1px;height:44px;line-height:44px;text-align:center;font-size:12px;color:#5cc27e">25</div>
<svg class="ic" style="left:1336.2px;top:785.5px;width:20px;height:20px" viewBox="0 0 20 20"><path d="M0 0h20L0 19z" fill="#79cc98"/></svg>
<div style="left:1405.8px;top:785px;width:1px;height:44px;background:repeating-linear-gradient(180deg,#a9b3bd 0 3px,transparent 3px 5px)"></div>
<div class="t" style="left:1408.3px;top:785.5px;width:70.1px;height:44px;line-height:44px;text-align:center;font-size:12px;color:#8a8d92">6</div>
<div style="left:1475.9px;top:785px;width:1px;height:44px;background:repeating-linear-gradient(180deg,#a9b3bd 0 3px,transparent 3px 5px)"></div>
<div class="t" style="left:1478.4px;top:785.5px;width:70.1px;height:44px;line-height:44px;text-align:center;font-size:12px;color:#8a8d92">4 590</div>
<div style="left:1195.5px;top:872px;width:350.5px;height:1px;background:repeating-linear-gradient(90deg,#a9b3bd 0 3px,transparent 3px 5px)"></div>
<div class="t" style="left:1198.0px;top:829.5px;width:70.1px;height:44px;line-height:44px;text-align:center;font-size:12px;color:#8a8d92">19 125</div>
<div style="left:1265.6px;top:829px;width:1px;height:44px;background:repeating-linear-gradient(180deg,#a9b3bd 0 3px,transparent 3px 5px)"></div>
<div class="t" style="left:1268.1px;top:829.5px;width:70.1px;height:44px;line-height:44px;text-align:center;font-size:12px;color:#8a8d92">19 125</div>
<div style="left:1335.7px;top:829px;width:1px;height:44px;background:repeating-linear-gradient(180deg,#a9b3bd 0 3px,transparent 3px 5px)"></div>
<div class="t" style="left:1338.2px;top:829.5px;width:70.1px;height:44px;line-height:44px;text-align:center;font-size:12px;color:#5cc27e">19 125</div>
<svg class="ic" style="left:1336.2px;top:829.5px;width:20px;height:20px" viewBox="0 0 20 20"><path d="M0 0h20L0 19z" fill="#79cc98"/></svg>
<div style="left:1405.8px;top:829px;width:1px;height:44px;background:repeating-linear-gradient(180deg,#a9b3bd 0 3px,transparent 3px 5px)"></div>
<div class="t" style="left:1408.3px;top:829.5px;width:70.1px;height:44px;line-height:44px;text-align:center;font-size:12px;color:#8a8d92">6</div>
<div style="left:1475.9px;top:829px;width:1px;height:44px;background:repeating-linear-gradient(180deg,#a9b3bd 0 3px,transparent 3px 5px)"></div>
<div class="t" style="left:1478.4px;top:829.5px;width:70.1px;height:44px;line-height:44px;text-align:center;font-size:12px;color:#8a8d92">4 590</div>
<div style="position:absolute;left:1195.5px;top:741px;width:1px;height:132px;background:#a5acb3"></div>
<div class="t" style="left:1546.0px;top:692px;width:350.5px;height:24px;line-height:24px;text-align:center;font-size:11.2px;color:#1c1c1c">19.10.2025</div>
<div style="position:absolute;left:1546.0px;top:692px;width:1px;height:49px;background:#c6c6cc"></div>
<div class="t" style="left:1546.0px;top:717.5px;width:70.1px;height:24px;line-height:24px;text-align:center;font-size:11.5px;color:#1c1c1c;letter-spacing:-.1px">Согл.план</div>
<div class="t" style="left:1616.1px;top:717.5px;width:70.1px;height:24px;line-height:24px;text-align:center;font-size:11.5px;color:#1c1c1c;letter-spacing:-.1px">Опер.план</div>
<div style="left:1616.1px;top:717px;width:1px;height:24px;background:repeating-linear-gradient(180deg,#bdbdc2 0 3px,transparent 3px 5px)"></div>
<div class="t" style="left:1686.2px;top:717.5px;width:70.1px;height:24px;line-height:24px;text-align:center;font-size:11.5px;color:#1c1c1c;letter-spacing:-.1px">Факт</div>
<div style="left:1686.2px;top:717px;width:1px;height:24px;background:repeating-linear-gradient(180deg,#bdbdc2 0 3px,transparent 3px 5px)"></div>
<div class="t" style="left:1756.3px;top:717.5px;width:70.1px;height:24px;line-height:24px;text-align:center;font-size:11.5px;color:#1c1c1c;letter-spacing:-.1px">Уд. трудоз...</div>
<div style="left:1756.3px;top:717px;width:1px;height:24px;background:repeating-linear-gradient(180deg,#bdbdc2 0 3px,transparent 3px 5px)"></div>
<div class="t" style="left:1826.4px;top:717.5px;width:70.1px;height:24px;line-height:24px;text-align:center;font-size:11.5px;color:#1c1c1c;letter-spacing:-.1px">Ставка</div>
<div style="left:1826.4px;top:717px;width:1px;height:24px;background:repeating-linear-gradient(180deg,#bdbdc2 0 3px,transparent 3px 5px)"></div>
<div style="position:absolute;left:1546.0px;top:741px;width:350.5px;height:132px;background:#c5dcf0"></div>
<div style="left:1546.0px;top:784px;width:350.5px;height:1px;background:repeating-linear-gradient(90deg,#a9b3bd 0 3px,transparent 3px 5px)"></div>
<div class="t" style="left:1548.5px;top:741.5px;width:70.1px;height:44px;line-height:44px;text-align:center;font-size:12px;color:#8a8d92">5</div>
<div style="left:1616.1px;top:741px;width:1px;height:44px;background:repeating-linear-gradient(180deg,#a9b3bd 0 3px,transparent 3px 5px)"></div>
<div class="t" style="left:1618.6px;top:741.5px;width:70.1px;height:44px;line-height:44px;text-align:center;font-size:12px;color:#8a8d92">5</div>
<div style="left:1686.2px;top:741px;width:1px;height:44px;background:repeating-linear-gradient(180deg,#a9b3bd 0 3px,transparent 3px 5px)"></div>
<div class="t" style="left:1688.7px;top:741.5px;width:70.1px;height:44px;line-height:44px;text-align:center;font-size:12px;color:#5cc27e">5</div>
<svg class="ic" style="left:1686.7px;top:741.5px;width:20px;height:20px" viewBox="0 0 20 20"><path d="M0 0h20L0 19z" fill="#79cc98"/></svg>
<div style="left:1756.3px;top:741px;width:1px;height:44px;background:repeating-linear-gradient(180deg,#a9b3bd 0 3px,transparent 3px 5px)"></div>
<div class="t" style="left:1758.8px;top:741.5px;width:70.1px;height:44px;line-height:44px;text-align:center;font-size:12px;color:#8a8d92">6</div>
<div style="left:1826.4px;top:741px;width:1px;height:44px;background:repeating-linear-gradient(180deg,#a9b3bd 0 3px,transparent 3px 5px)"></div>
<div class="t" style="left:1828.9px;top:741.5px;width:70.1px;height:44px;line-height:44px;text-align:center;font-size:12px;color:#8a8d92">4 590</div>
<div style="left:1546.0px;top:828px;width:350.5px;height:1px;background:repeating-linear-gradient(90deg,#a9b3bd 0 3px,transparent 3px 5px)"></div>
<div class="t" style="left:1548.5px;top:785.5px;width:70.1px;height:44px;line-height:44px;text-align:center;font-size:12px;color:#8a8d92">25</div>
<div style="left:1616.1px;top:785px;width:1px;height:44px;background:repeating-linear-gradient(180deg,#a9b3bd 0 3px,transparent 3px 5px)"></div>
<div class="t" style="left:1618.6px;top:785.5px;width:70.1px;height:44px;line-height:44px;text-align:center;font-size:12px;color:#8a8d92">25</div>
<div style="left:1686.2px;top:785px;width:1px;height:44px;background:repeating-linear-gradient(180deg,#a9b3bd 0 3px,transparent 3px 5px)"></div>
<div class="t" style="left:1688.7px;top:785.5px;width:70.1px;height:44px;line-height:44px;text-align:center;font-size:12px;color:#5cc27e">25</div>
<svg class="ic" style="left:1686.7px;top:785.5px;width:20px;height:20px" viewBox="0 0 20 20"><path d="M0 0h20L0 19z" fill="#79cc98"/></svg>
<div style="left:1756.3px;top:785px;width:1px;height:44px;background:repeating-linear-gradient(180deg,#a9b3bd 0 3px,transparent 3px 5px)"></div>
<div class="t" style="left:1758.8px;top:785.5px;width:70.1px;height:44px;line-height:44px;text-align:center;font-size:12px;color:#8a8d92">6</div>
<div style="left:1826.4px;top:785px;width:1px;height:44px;background:repeating-linear-gradient(180deg,#a9b3bd 0 3px,transparent 3px 5px)"></div>
<div class="t" style="left:1828.9px;top:785.5px;width:70.1px;height:44px;line-height:44px;text-align:center;font-size:12px;color:#8a8d92">4 590</div>
<div style="left:1546.0px;top:872px;width:350.5px;height:1px;background:repeating-linear-gradient(90deg,#a9b3bd 0 3px,transparent 3px 5px)"></div>
<div class="t" style="left:1548.5px;top:829.5px;width:70.1px;height:44px;line-height:44px;text-align:center;font-size:12px;color:#8a8d92">19 125</div>
<div style="left:1616.1px;top:829px;width:1px;height:44px;background:repeating-linear-gradient(180deg,#a9b3bd 0 3px,transparent 3px 5px)"></div>
<div class="t" style="left:1618.6px;top:829.5px;width:70.1px;height:44px;line-height:44px;text-align:center;font-size:12px;color:#8a8d92">19 125</div>
<div style="left:1686.2px;top:829px;width:1px;height:44px;background:repeating-linear-gradient(180deg,#a9b3bd 0 3px,transparent 3px 5px)"></div>
<div class="t" style="left:1688.7px;top:829.5px;width:70.1px;height:44px;line-height:44px;text-align:center;font-size:12px;color:#5cc27e">19 125</div>
<svg class="ic" style="left:1686.7px;top:829.5px;width:20px;height:20px" viewBox="0 0 20 20"><path d="M0 0h20L0 19z" fill="#79cc98"/></svg>
<div style="left:1756.3px;top:829px;width:1px;height:44px;background:repeating-linear-gradient(180deg,#a9b3bd 0 3px,transparent 3px 5px)"></div>
<div class="t" style="left:1758.8px;top:829.5px;width:70.1px;height:44px;line-height:44px;text-align:center;font-size:12px;color:#8a8d92">6</div>
<div style="left:1826.4px;top:829px;width:1px;height:44px;background:repeating-linear-gradient(180deg,#a9b3bd 0 3px,transparent 3px 5px)"></div>
<div class="t" style="left:1828.9px;top:829.5px;width:70.1px;height:44px;line-height:44px;text-align:center;font-size:12px;color:#8a8d92">4 590</div>
<div style="position:absolute;left:1546.0px;top:741px;width:1px;height:132px;background:#a5acb3"></div>
<div style="position:absolute;left:1896.5px;top:692px;width:1px;height:49px;background:#c6c6cc"></div>
<div class="t" style="left:1896.5px;top:717.5px;width:70.1px;height:24px;line-height:24px;text-align:center;font-size:11.5px;color:#1c1c1c;letter-spacing:-.1px">Согл.план</div>
<div style="position:absolute;left:1896.5px;top:741px;width:350.5px;height:132px;background:#c5dcf0"></div>
<div style="left:1896.5px;top:784px;width:350.5px;height:1px;background:repeating-linear-gradient(90deg,#a9b3bd 0 3px,transparent 3px 5px)"></div>
<div class="t" style="left:1899.0px;top:741.5px;width:70.1px;height:44px;line-height:44px;text-align:center;font-size:12px;color:#8a8d92">5</div>
<div style="left:1966.6px;top:741px;width:1px;height:44px;background:repeating-linear-gradient(180deg,#a9b3bd 0 3px,transparent 3px 5px)"></div>
<div class="t" style="left:1969.1px;top:741.5px;width:70.1px;height:44px;line-height:44px;text-align:center;font-size:12px;color:#8a8d92">5</div>
<div style="left:2036.7px;top:741px;width:1px;height:44px;background:repeating-linear-gradient(180deg,#a9b3bd 0 3px,transparent 3px 5px)"></div>
<div class="t" style="left:2039.2px;top:741.5px;width:70.1px;height:44px;line-height:44px;text-align:center;font-size:12px;color:#5cc27e">5</div>
<svg class="ic" style="left:2037.2px;top:741.5px;width:20px;height:20px" viewBox="0 0 20 20"><path d="M0 0h20L0 19z" fill="#79cc98"/></svg>
<div style="left:2106.8px;top:741px;width:1px;height:44px;background:repeating-linear-gradient(180deg,#a9b3bd 0 3px,transparent 3px 5px)"></div>
<div class="t" style="left:2109.3px;top:741.5px;width:70.1px;height:44px;line-height:44px;text-align:center;font-size:12px;color:#8a8d92">6</div>
<div style="left:2176.9px;top:741px;width:1px;height:44px;background:repeating-linear-gradient(180deg,#a9b3bd 0 3px,transparent 3px 5px)"></div>
<div class="t" style="left:2179.4px;top:741.5px;width:70.1px;height:44px;line-height:44px;text-align:center;font-size:12px;color:#8a8d92">4 590</div>
<div style="left:1896.5px;top:828px;width:350.5px;height:1px;background:repeating-linear-gradient(90deg,#a9b3bd 0 3px,transparent 3px 5px)"></div>
<div class="t" style="left:1899.0px;top:785.5px;width:70.1px;height:44px;line-height:44px;text-align:center;font-size:12px;color:#8a8d92">25</div>
<div style="left:1966.6px;top:785px;width:1px;height:44px;background:repeating-linear-gradient(180deg,#a9b3bd 0 3px,transparent 3px 5px)"></div>
<div class="t" style="left:1969.1px;top:785.5px;width:70.1px;height:44px;line-height:44px;text-align:center;font-size:12px;color:#8a8d92">25</div>
<div style="left:2036.7px;top:785px;width:1px;height:44px;background:repeating-linear-gradient(180deg,#a9b3bd 0 3px,transparent 3px 5px)"></div>
<div class="t" style="left:2039.2px;top:785.5px;width:70.1px;height:44px;line-height:44px;text-align:center;font-size:12px;color:#5cc27e">25</div>
<svg class="ic" style="left:2037.2px;top:785.5px;width:20px;height:20px" viewBox="0 0 20 20"><path d="M0 0h20L0 19z" fill="#79cc98"/></svg>
<div style="left:2106.8px;top:785px;width:1px;height:44px;background:repeating-linear-gradient(180deg,#a9b3bd 0 3px,transparent 3px 5px)"></div>
<div class="t" style="left:2109.3px;top:785.5px;width:70.1px;height:44px;line-height:44px;text-align:center;font-size:12px;color:#8a8d92">6</div>
<div style="left:2176.9px;top:785px;width:1px;height:44px;background:repeating-linear-gradient(180deg,#a9b3bd 0 3px,transparent 3px 5px)"></div>
<div class="t" style="left:2179.4px;top:785.5px;width:70.1px;height:44px;line-height:44px;text-align:center;font-size:12px;color:#8a8d92">4 590</div>
<div style="left:1896.5px;top:872px;width:350.5px;height:1px;background:repeating-linear-gradient(90deg,#a9b3bd 0 3px,transparent 3px 5px)"></div>
<div class="t" style="left:1899.0px;top:829.5px;width:70.1px;height:44px;line-height:44px;text-align:center;font-size:12px;color:#8a8d92">19 125</div>
<div style="left:1966.6px;top:829px;width:1px;height:44px;background:repeating-linear-gradient(180deg,#a9b3bd 0 3px,transparent 3px 5px)"></div>
<div class="t" style="left:1969.1px;top:829.5px;width:70.1px;height:44px;line-height:44px;text-align:center;font-size:12px;color:#8a8d92">19 125</div>
<div style="left:2036.7px;top:829px;width:1px;height:44px;background:repeating-linear-gradient(180deg,#a9b3bd 0 3px,transparent 3px 5px)"></div>
<div class="t" style="left:2039.2px;top:829.5px;width:70.1px;height:44px;line-height:44px;text-align:center;font-size:12px;color:#5cc27e">19 125</div>
<svg class="ic" style="left:2037.2px;top:829.5px;width:20px;height:20px" viewBox="0 0 20 20"><path d="M0 0h20L0 19z" fill="#79cc98"/></svg>
<div style="left:2106.8px;top:829px;width:1px;height:44px;background:repeating-linear-gradient(180deg,#a9b3bd 0 3px,transparent 3px 5px)"></div>
<div class="t" style="left:2109.3px;top:829.5px;width:70.1px;height:44px;line-height:44px;text-align:center;font-size:12px;color:#8a8d92">6</div>
<div style="left:2176.9px;top:829px;width:1px;height:44px;background:repeating-linear-gradient(180deg,#a9b3bd 0 3px,transparent 3px 5px)"></div>
<div class="t" style="left:2179.4px;top:829.5px;width:70.1px;height:44px;line-height:44px;text-align:center;font-size:12px;color:#8a8d92">4 590</div>
<div style="position:absolute;left:1896.5px;top:741px;width:1px;height:132px;background:#a5acb3"></div>
<div style="position:absolute;left:845px;top:873px;width:1073px;height:27px;background:#fff"></div>
<div style="position:absolute;left:45px;top:900px;width:1873px;height:10px;background:#f2f2f4"></div>
<div style="position:absolute;left:296px;top:900px;width:35px;height:12px;background:#dcdcdf;border-radius:6px"></div>
<div style="position:absolute;left:845px;top:717px;width:1px;height:182px;background:#a9a9b0"></div>
<div style="left:1261px;top:83px;width:419px;height:239px;background:#f3f3f6;border-radius:0 0 6px 6px;box-shadow:0 3px 6px rgba(0,0,0,.18);overflow:hidden"></div>
<div style="position:absolute;left:1261px;top:83px;width:419px;height:48px;background:#bed4ea"></div>
<div class="t" style="left:1317px;top:96px;width:360px;height:22px;line-height:22px;font-size:15px;color:#3d8ad6">Количество</div>
<svg class="ic" style="left:1277.00px;top:95.00px;width:24.0px;height:24.0px;color:#58585e" viewBox="0 0 24 24" fill="none" stroke="currentColor" stroke-width="1.7" stroke-linecap="round" stroke-linejoin="round"><rect x="6.6" y="1" width="10" height="10" rx="1.2"/><rect x="1" y="13.8" width="9.5" height="9.5" rx="1.2"/><rect x="13.3" y="13.8" width="9.5" height="9.5" rx="1.2"/><g fill="currentColor" stroke="none" font-family="Liberation Sans" font-size="8.5" text-anchor="middle"><text x="11.6" y="9">1</text><text x="5.75" y="21.6">2</text><text x="18.05" y="21.6">3</text></g></svg>
<div class="t" style="left:1317px;top:144px;width:360px;height:22px;line-height:22px;font-size:15px;color:#2c2c30">Стоимость по ставке</div>
<svg class="ic" style="left:1277.00px;top:143.00px;width:24.0px;height:24.0px;color:#58585e" viewBox="0 0 24 24" fill="none" stroke="currentColor" stroke-width="1.7" stroke-linecap="round" stroke-linejoin="round"><path d="M7.500000000000001 3.6V9.1A5.3 2.1 0 0 0 18.1 9.1V3.6" fill="#f3f3f6"/><ellipse cx="12.8" cy="3.6" rx="5.3" ry="2.1" fill="#f3f3f6"/><path d="M0.7999999999999998 15.8V19.6A5.2 2.1 0 0 0 11.2 19.6V15.8" fill="#f3f3f6"/><ellipse cx="6" cy="15.8" rx="5.2" ry="2.1" fill="#f3f3f6"/><path d="M13.3 15.8V19.6A5.2 2.1 0 0 0 23.7 19.6V15.8" fill="#f3f3f6"/><ellipse cx="18.5" cy="15.8" rx="5.2" ry="2.1" fill="#f3f3f6"/><circle cx="12.3" cy="14.3" r="5.6" fill="#f3f3f6"/><path d="M11.4 12.4L12.6 11.5V17.2" stroke-width="1.2"/></svg>
<div class="t" style="left:1317px;top:192px;width:360px;height:22px;line-height:22px;font-size:15px;color:#2c2c30">Стоимость по распределенной ставке</div>
<svg class="ic" style="left:1277.00px;top:191.00px;width:24.0px;height:24.0px;color:#58585e" viewBox="0 0 24 24" fill="none" stroke="currentColor" stroke-width="1.7" stroke-linecap="round" stroke-linejoin="round"><path d="M8 2.6V7.1A5 2 0 0 0 18 7.1V2.6" fill="#f3f3f6"/><ellipse cx="13" cy="2.6" rx="5" ry="2" fill="#f3f3f6"/><path d="M2 19.5A10.5 2.6 0 0 0 22.5 19.5V17" /><circle cx="16.8" cy="12.6" r="5.6" fill="#f3f3f6"/><circle cx="12.4" cy="12.6" r="5.6" fill="#f3f3f6"/><circle cx="7.2" cy="12.6" r="5.7" fill="#f3f3f6"/><path d="M6.4 10.6L7.6 9.8V15.4" stroke-width="1.2"/></svg>
<div class="t" style="left:1317px;top:240px;width:360px;height:22px;line-height:22px;font-size:15px;color:#2c2c30">Трудозатраты по уд.трудозатратам</div>
<svg class="ic" style="left:1277.00px;top:239.00px;width:24.0px;height:24.0px;color:#58585e" viewBox="0 0 24 24" fill="none" stroke="currentColor" stroke-width="1.7" stroke-linecap="round" stroke-linejoin="round"><circle cx="11.6" cy="1.9" r="2" fill="currentColor" stroke="none"/><path d="M1.8 9.8L8 4.6L12.6 9.2L10.2 12.6L6.6 11.2L4.8 12.8Z" fill="currentColor" stroke-width="1.4"/><path d="M6 12L2.2 21M8.6 12.5L10.4 21" stroke-width="2"/><path d="M10 9.5L18 16" stroke-width="1.6"/><path d="M11.5 21.6L17.5 13.8L23.6 21.6Z" fill="currentColor" stroke="none"/><circle cx="19.8" cy="6" r="3.7" stroke-width="1.3"/><path d="M19.8 4.2V6.6M19.8 8V8.1" stroke-width="1.2"/></svg>
<div class="t" style="left:1317px;top:288px;width:360px;height:22px;line-height:22px;font-size:15px;color:#2c2c30">Трудозатраты по распределенным трудозатратам</div>
<svg class="ic" style="left:1277.00px;top:287.00px;width:24.0px;height:24.0px;color:#58585e" viewBox="0 0 24 24" fill="none" stroke="currentColor" stroke-width="1.7" stroke-linecap="round" stroke-linejoin="round"><circle cx="11.6" cy="1.9" r="2" fill="currentColor" stroke="none"/><path d="M1.8 9.8L8 4.6L12.6 9.2L10.2 12.6L6.6 11.2L4.8 12.8Z" fill="currentColor" stroke-width="1.4"/><path d="M6 12L2.2 21M8.6 12.5L10.4 21" stroke-width="2"/><path d="M10 9.5L18 16" stroke-width="1.6"/><path d="M11.5 21.6L17.5 13.8L23.6 21.6Z" fill="currentColor" stroke="none"/><path d="M17.0 2.3V9.3A2.6 1.3 0 0 0 22.200000000000003 9.3V2.3" fill="#f3f3f6" stroke-width="1.2"/><ellipse cx="19.6" cy="2.3" rx="2.6" ry="1.3" fill="#f3f3f6" stroke-width="1.2"/><path d="M17 5.2A2.6 1.3 0 0 0 22.2 5.2M17 7.6A2.6 1.3 0 0 0 22.2 7.6" stroke-width="1.2"/></svg>
<svg class="ic" style="left:788px;top:59px;width:70px;height:14px" viewBox="0 0 70 14"><path d="M0 7H60" stroke="#000" stroke-width="3"/><path d="M58 1.5L70 7l-12 5.5z" fill="#000"/></svg>
<svg class="ic" style="left:755px;top:46px;width:36px;height:40px" viewBox="0 0 36 40"><ellipse cx="18" cy="20" rx="15.6" ry="17.4" fill="#fff" stroke="#000" stroke-width="3.2"/><text x="18" y="27.5" text-anchor="middle" font-family="Liberation Sans" font-size="21" fill="#111">1</text></svg>
<svg class="ic" style="left:1117px;top:73px;width:14px;height:62px" viewBox="0 0 14 62"><path d="M7 62V10" stroke="#000" stroke-width="3"/><path d="M1.5 12.5L7 0l5.5 12.5z" fill="#000"/></svg>
<svg class="ic" style="left:1106.5px;top:131px;width:36px;height:40px" viewBox="0 0 36 40"><ellipse cx="18" cy="20" rx="15.6" ry="17.4" fill="#fff" stroke="#000" stroke-width="3.2"/><text x="18" y="27.5" text-anchor="middle" font-family="Liberation Sans" font-size="21" fill="#111">2</text></svg>
<svg class="ic" style="left:1207px;top:100px;width:70px;height:14px" viewBox="0 0 70 14"><path d="M0 7H60" stroke="#000" stroke-width="3"/><path d="M58 1.5L70 7l-12 5.5z" fill="#000"/></svg>
<svg class="ic" style="left:1175px;top:87px;width:36px;height:40px" viewBox="0 0 36 40"><ellipse cx="18" cy="20" rx="15.6" ry="17.4" fill="#fff" stroke="#000" stroke-width="3.2"/><text x="18" y="27.5" text-anchor="middle" font-family="Liberation Sans" font-size="21" fill="#111">3</text></svg>
<svg class="ic" style="left:1207px;top:148px;width:70px;height:14px" viewBox="0 0 70 14"><path d="M0 7H60" stroke="#000" stroke-width="3"/><path d="M58 1.5L70 7l-12 5.5z" fill="#000"/></svg>
<svg class="ic" style="left:1175px;top:135px;width:36px;height:40px" viewBox="0 0 36 40"><ellipse cx="18" cy="20" rx="15.6" ry="17.4" fill="#fff" stroke="#000" stroke-width="3.2"/><text x="18" y="27.5" text-anchor="middle" font-family="Liberation Sans" font-size="21" fill="#111">4</text></svg>
<svg class="ic" style="left:1207px;top:196px;width:70px;height:14px" viewBox="0 0 70 14"><path d="M0 7H60" stroke="#000" stroke-width="3"/><path d="M58 1.5L70 7l-12 5.5z" fill="#000"/></svg>
<svg class="ic" style="left:1175px;top:183px;width:36px;height:40px" viewBox="0 0 36 40"><ellipse cx="18" cy="20" rx="15.6" ry="17.4" fill="#fff" stroke="#000" stroke-width="3.2"/><text x="18" y="27.5" text-anchor="middle" font-family="Liberation Sans" font-size="21" fill="#111">5</text></svg>
<svg class="ic" style="left:1207px;top:244px;width:70px;height:14px" viewBox="0 0 70 14"><path d="M0 7H60" stroke="#000" stroke-width="3"/><path d="M58 1.5L70 7l-12 5.5z" fill="#000"/></svg>
<svg class="ic" style="left:1175px;top:231px;width:36px;height:40px" viewBox="0 0 36 40"><ellipse cx="18" cy="20" rx="15.6" ry="17.4" fill="#fff" stroke="#000" stroke-width="3.2"/><text x="18" y="27.5" text-anchor="middle" font-family="Liberation Sans" font-size="21" fill="#111">6</text></svg>
<svg class="ic" style="left:1207px;top:292px;width:70px;height:14px" viewBox="0 0 70 14"><path d="M0 7H60" stroke="#000" stroke-width="3"/><path d="M58 1.5L70 7l-12 5.5z" fill="#000"/></svg>
<svg class="ic" style="left:1175px;top:279px;width:36px;height:40px" viewBox="0 0 36 40"><ellipse cx="18" cy="20" rx="15.6" ry="17.4" fill="#fff" stroke="#000" stroke-width="3.2"/><text x="18" y="27.5" text-anchor="middle" font-family="Liberation Sans" font-size="21" fill="#111">7</text></svg>
</body></html>
